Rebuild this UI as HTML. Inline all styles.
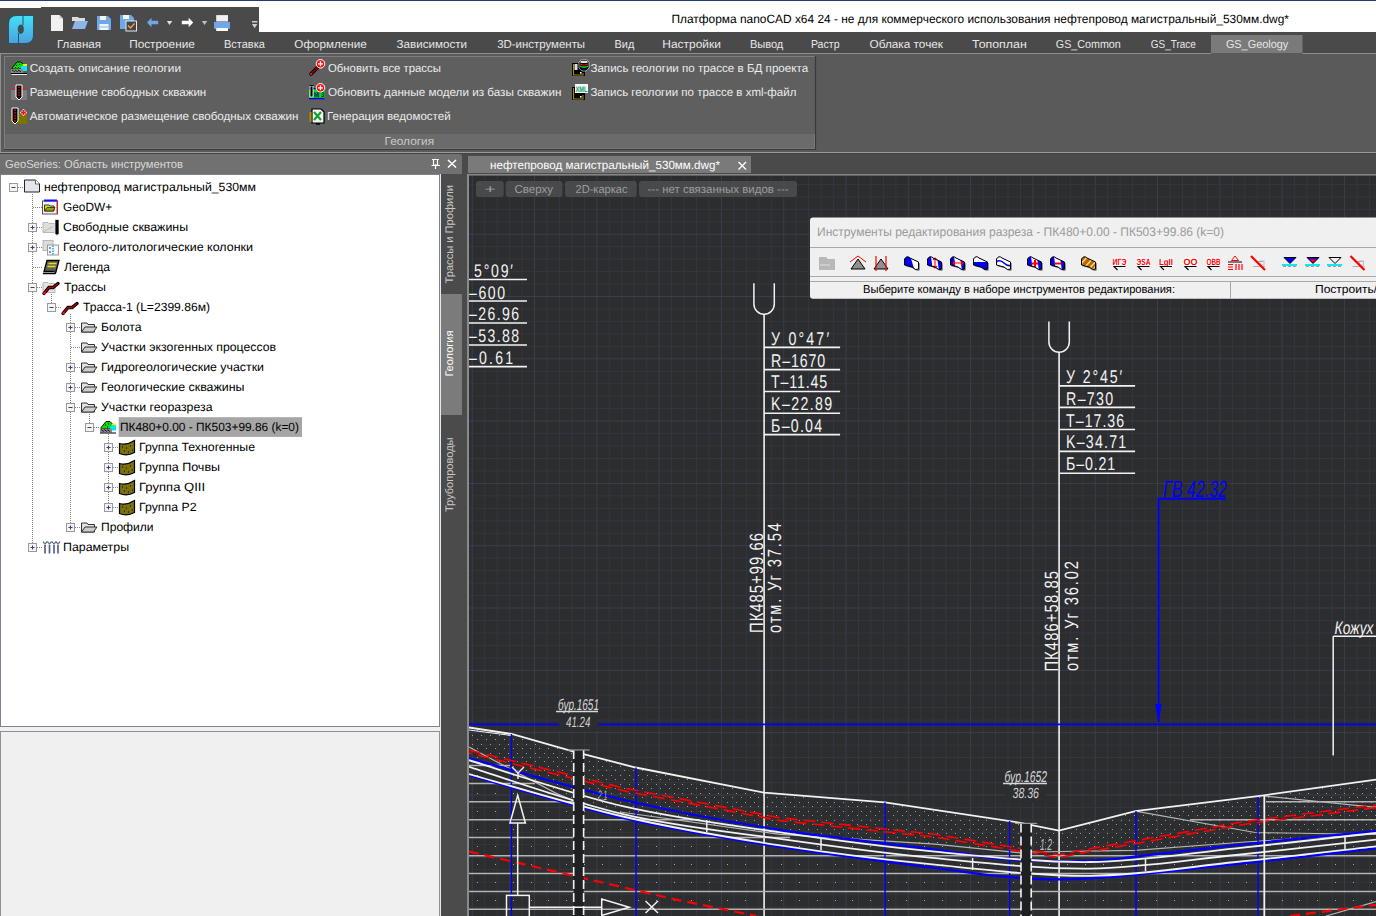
<!DOCTYPE html>
<html><head><meta charset="utf-8"><title>nanoCAD</title>
<style>html,body{margin:0;padding:0;background:#2c2d2f;overflow:hidden}svg{display:block}</style></head>
<body><svg width="1376" height="916" viewBox="0 0 1376 916" text-rendering="geometricPrecision">
<rect x="0" y="0" width="1376" height="916" fill="#2c2d2f" />
<rect x="0" y="0" width="1376" height="32" fill="#ffffff" />
<line x1="0" y1="0.5" x2="1376" y2="0.5" stroke="#1f3f70" stroke-width="1" />
<rect x="0" y="8" width="41" height="25" fill="#4a4a4a" />
<rect x="41" y="7" width="218" height="26" fill="#4a4a4a" />
<path d="M51,15 H59.5 L63,18.5 V31 H51 Z" fill="#f0f0f0"/><path d="M59.5,15 V18.5 H63" fill="#c8c8c8"/>
<path d="M72,17 H78 L79,18 H85 V21 H72 Z" fill="#dcdcdc"/><path d="M72,29 L75,21 H88 L85,29 Z" fill="#8ab6ea"/>
<path d="M97,16 H108 L111,19 V30 H97 Z" fill="#6ea8e8"/><rect x="100" y="16" width="6" height="4" fill="#f4f4f4"/><rect x="99.5" y="24" width="9" height="6" fill="#f4f4f4"/><line x1="100" y1="27" x2="108" y2="27" stroke="#6ea8e8" stroke-width="0.8"/>
<path d="M120,15 H131 L134,18 V29 H120 Z" fill="#6ea8e8"/><rect x="123" y="15" width="6" height="4" fill="#f4f4f4"/><rect x="126" y="21" width="10.5" height="10" fill="#454545" stroke="#e8e8e8" stroke-width="1"/><path d="M128,25.5 L130.5,28 L134.5,23.5" stroke="#f0a848" stroke-width="1.3" fill="none"/>
<path d="M147,22.5 L151.5,17.8 V20.8 H158.2 V24.2 H151.5 V27.2 Z" fill="#6ea8e8"/>
<path d="M166.8,21 H172.3 L169.5,25 Z" fill="#e0e0e0"/>
<path d="M193.2,22.5 L188.7,17.8 V20.8 H181.8 V24.2 H188.7 V27.2 Z" fill="#ffffff"/>
<path d="M201.8,21 H207.3 L204.5,25 Z" fill="#bdbdbd"/>
<rect x="216.2" y="15.1" width="11.8" height="6.4" fill="#f0f0f0"/><rect x="214" y="21.9" width="16" height="6.8" fill="#6ea8e8"/><rect x="216.2" y="28" width="11.8" height="3" fill="#f8f8f8"/>
<rect x="252" y="21" width="5.3" height="1.5" fill="#cfcfcf"/><path d="M252,24 H257.3 L254.6,28.3 Z" fill="#cfcfcf"/>
<text x="671.5" y="23" font-size="12" fill="#000000" font-family="Liberation Sans" textLength="617.47" lengthAdjust="spacingAndGlyphs" >Платформа nanoCAD x64 24 - не для коммерческого использования нефтепровод магистральный_530мм.dwg*</text>
<rect x="0" y="32" width="1376" height="21" fill="#4a4a4a" />
<rect x="1211" y="35" width="91.5" height="18" fill="#7a7a7a" />
<defs><linearGradient id="lg" x1="0" y1="0" x2="0" y2="1"><stop offset="0" stop-color="#44e0f6"/><stop offset="1" stop-color="#4c9fe0"/></linearGradient></defs>
<path d="M17,15.5 H33.5 V35 Q33.5,43.5 25,43.5 H8.5 V24 Q8.5,15.5 17,15.5 Z" fill="url(#lg)" stroke="#1d4a5a" stroke-width="0.8"/>
<ellipse cx="20.8" cy="29.2" rx="2.6" ry="4.2" fill="#4a4a4a" stroke="#1d4a5a" stroke-width="0.7"/>
<path d="M23,15.8 V25.5 M18.5,33 V43.2" stroke="#1d4a5a" stroke-width="0.9"/>
<text x="57.0" y="48.3" font-size="11.5" fill="#e6e6e6" font-family="Liberation Sans" textLength="44.1" lengthAdjust="spacingAndGlyphs" >Главная</text>
<text x="129.2" y="48.3" font-size="11.5" fill="#e6e6e6" font-family="Liberation Sans" textLength="65.63" lengthAdjust="spacingAndGlyphs" >Построение</text>
<text x="224.0" y="48.3" font-size="11.5" fill="#e6e6e6" font-family="Liberation Sans" textLength="40.83" lengthAdjust="spacingAndGlyphs" >Вставка</text>
<text x="294.3" y="48.3" font-size="11.5" fill="#e6e6e6" font-family="Liberation Sans" textLength="72.51" lengthAdjust="spacingAndGlyphs" >Оформление</text>
<text x="396.6" y="48.3" font-size="11.5" fill="#e6e6e6" font-family="Liberation Sans" textLength="70.44" lengthAdjust="spacingAndGlyphs" >Зависимости</text>
<text x="497.2" y="48.3" font-size="11.5" fill="#e6e6e6" font-family="Liberation Sans" textLength="87.91" lengthAdjust="spacingAndGlyphs" >3D-инструменты</text>
<text x="614.6" y="48.3" font-size="11.5" fill="#e6e6e6" font-family="Liberation Sans" textLength="19.74" lengthAdjust="spacingAndGlyphs" >Вид</text>
<text x="662.3" y="48.3" font-size="11.5" fill="#e6e6e6" font-family="Liberation Sans" textLength="58.53" lengthAdjust="spacingAndGlyphs" >Настройки</text>
<text x="749.9" y="48.3" font-size="11.5" fill="#e6e6e6" font-family="Liberation Sans" textLength="33.42" lengthAdjust="spacingAndGlyphs" >Вывод</text>
<text x="810.9" y="48.3" font-size="11.5" fill="#e6e6e6" font-family="Liberation Sans" textLength="28.64" lengthAdjust="spacingAndGlyphs" >Растр</text>
<text x="869.5" y="48.3" font-size="11.5" fill="#e6e6e6" font-family="Liberation Sans" textLength="73.5" lengthAdjust="spacingAndGlyphs" >Облака точек</text>
<text x="972.1" y="48.3" font-size="11.5" fill="#e6e6e6" font-family="Liberation Sans" textLength="54.64" lengthAdjust="spacingAndGlyphs" >Топоплан</text>
<text x="1055.8" y="48.3" font-size="11.5" fill="#e6e6e6" font-family="Liberation Sans" textLength="65.02" lengthAdjust="spacingAndGlyphs" >GS_Common</text>
<text x="1150.8" y="48.3" font-size="11.5" fill="#e6e6e6" font-family="Liberation Sans" textLength="45.03" lengthAdjust="spacingAndGlyphs" >GS_Trace</text>
<text x="1225.9" y="48.3" font-size="11.5" fill="#e6e6e6" font-family="Liberation Sans" textLength="62.32" lengthAdjust="spacingAndGlyphs" >GS_Geology</text>
<rect x="0" y="53" width="1376" height="99" fill="#5a5a5a" />
<line x1="0" y1="53.5" x2="1211" y2="53.5" stroke="#8e8e8e" stroke-width="1" />
<line x1="1302.5" y1="53.5" x2="1376" y2="53.5" stroke="#8e8e8e" stroke-width="1" />
<line x1="0.5" y1="53" x2="0.5" y2="152" stroke="#8e8e8e" stroke-width="1" />
<rect x="4" y="56" width="812" height="94" fill="#5f5f5f" />
<rect x="5" y="134" width="810" height="15" fill="#6b6b6b" />
<line x1="4" y1="56.5" x2="815" y2="56.5" stroke="#7e7e7e" stroke-width="1" />
<line x1="4.5" y1="56" x2="4.5" y2="149" stroke="#7e7e7e" stroke-width="1" />
<line x1="4" y1="149.5" x2="816" y2="149.5" stroke="#3a3a3a" stroke-width="1.2" />
<line x1="815.5" y1="56" x2="815.5" y2="150" stroke="#3a3a3a" stroke-width="1.2" />
<line x1="5" y1="148.5" x2="815" y2="148.5" stroke="#767676" stroke-width="1" />
<line x1="814.5" y1="134" x2="814.5" y2="149" stroke="#767676" stroke-width="1" />
<text x="384.5" y="145.2" font-size="11.5" fill="#c8c8c8" font-family="Liberation Sans" textLength="49.64" lengthAdjust="spacingAndGlyphs" >Геология</text>
<text x="29.8" y="71.8" font-size="11.6" fill="#ececec" font-family="Liberation Sans" textLength="151.25" lengthAdjust="spacingAndGlyphs" >Создать описание геологии</text>
<text x="29.8" y="96.4" font-size="11.6" fill="#ececec" font-family="Liberation Sans" textLength="176.43" lengthAdjust="spacingAndGlyphs" >Размещение свободных скважин</text>
<text x="29.8" y="120.3" font-size="11.6" fill="#ececec" font-family="Liberation Sans" textLength="268.64" lengthAdjust="spacingAndGlyphs" >Автоматическое размещение свободных скважин</text>
<text x="328.0" y="71.8" font-size="11.6" fill="#ececec" font-family="Liberation Sans" textLength="112.8" lengthAdjust="spacingAndGlyphs" >Обновить все трассы</text>
<text x="328.0" y="96.4" font-size="11.6" fill="#ececec" font-family="Liberation Sans" textLength="233.38" lengthAdjust="spacingAndGlyphs" >Обновить данные модели из базы скважин</text>
<text x="327.0" y="120.3" font-size="11.6" fill="#ececec" font-family="Liberation Sans" textLength="123.63" lengthAdjust="spacingAndGlyphs" >Генерация ведомостей</text>
<text x="590.4" y="71.8" font-size="11.6" fill="#ececec" font-family="Liberation Sans" textLength="217.7" lengthAdjust="spacingAndGlyphs" >Запись геологии по трассе в БД проекта</text>
<text x="590.4" y="96.4" font-size="11.6" fill="#ececec" font-family="Liberation Sans" textLength="206.0" lengthAdjust="spacingAndGlyphs" >Запись геологии по трассе в xml-файл</text>
<path d="M12,68 L17,62 H21 L26,67 L24,69 H12 Z" fill="#00e000" stroke="#000" stroke-width="0.9"/><path d="M16,65h1v1h-1z M19,64h1v1h-1z M21,66h1v1h-1z M18,67h1v1h-1z M15,67h1v1h-1z" fill="#000"/><rect x="23" y="64" width="4" height="2" fill="#f0f000"/><rect x="21" y="66" width="6" height="5" fill="#00e8f8"/><rect x="11" y="69" width="12" height="4" fill="#8a8a8a"/><path d="M12,70 l3,2 M15,70 l3,2 M18,70 l3,2" stroke="#000" stroke-width="0.8"/><path d="M11,73.5 H27" stroke="#000" stroke-width="1"/><path d="M11.5,74.5 H27" stroke="#f0f0f0" stroke-width="1"/>
<rect x="11" y="89" width="16" height="11" fill="#7c7c7c"/><line x1="11" y1="89.5" x2="27" y2="89.5" stroke="#ff1010" stroke-width="1"/>
<path d="M16,85 H22 V97 L19,100 L16,97 Z" fill="#000" stroke="#fff" stroke-width="1"/><path d="M19,86.5 V98" stroke="#ff1010" stroke-width="1.4" stroke-dasharray="1.5 1.2"/>
<rect x="11" y="114" width="16" height="10" fill="#7a7400"/>
<path d="M12,108 H18 V121 L15,124 L12,121 Z" fill="#000" stroke="#fff" stroke-width="1"/><path d="M15,109.5 V122" stroke="#ff1010" stroke-width="1.4" stroke-dasharray="1.5 1.2"/>
<path d="M23.5,109 L27,112.5 L23.5,116 L20,112.5 Z" fill="#fff"/><path d="M23.5,110 v5 M21,112.5 h5" stroke="#ff1010" stroke-width="1.8"/>
<path d="M311,74 L318,67" stroke="#000" stroke-width="3.6" stroke-linecap="round"/><path d="M311,74 L318,67" stroke="#8a0000" stroke-width="1.8"/><circle cx="311" cy="74" r="1" fill="#ff2020"/>
<circle cx="320.5" cy="63.8" r="4.3" fill="#ff1010" stroke="#fff" stroke-width="1"/><path d="M318.0,63.8 h5 M320.5,61.3 v5" stroke="#fff" stroke-width="1.3"/>
<rect x="309" y="88" width="15.5" height="11" fill="#00e000"/><rect x="309" y="88" width="15.5" height="1.2" fill="#0000e0"/><rect x="309" y="97.8" width="15.5" height="1.5" fill="#0000e0"/><text x="314" y="96.5" font-size="7" font-weight="bold" fill="#0000a0" font-family="Liberation Sans" textLength="10" lengthAdjust="spacingAndGlyphs">МГЗ</text><rect x="310" y="86" width="3" height="11" fill="#000" stroke="#fff" stroke-width="0.8"/><path d="M309.5,85.5 h4" stroke="#000" stroke-width="1"/>
<circle cx="320.5" cy="87.8" r="4.3" fill="#ff1010" stroke="#fff" stroke-width="1"/><path d="M318.0,87.8 h5 M320.5,85.3 v5" stroke="#fff" stroke-width="1.3"/>
<path d="M312,109 H321 L324,112 V123 H312 Z" fill="#f4f4f4" stroke="#000" stroke-width="1.2"/><rect x="309.5" y="112" width="2" height="10" fill="#a89000"/><path d="M314,112 L321,120 M321,112 L314,120" stroke="#10a030" stroke-width="2.2"/><path d="M316,124 h4" stroke="#000" stroke-width="1.5"/>
<rect x="572" y="63" width="13" height="13" fill="#000"/><path d="M573.5,64 V75 H583 V73" stroke="#a09000" stroke-width="1.1" fill="none"/><rect x="574.5" y="64" width="3" height="6" fill="#e0e0e0"/><rect x="580" y="72" width="1.6" height="1.6" fill="#fff"/><path d="M579,62 L581,60 H587 L589,62 V68 L586,71 H582 L579,68 Z" fill="#000" stroke="#fff" stroke-width="0.6"/><rect x="580.5" y="61" width="7" height="2" fill="#e0e0e0"/><path d="M580,64 Q584,66.5 588,64" stroke="#ff1010" stroke-width="1" fill="none"/><path d="M580,66 Q584,68.5 588,66" stroke="#00e000" stroke-width="1.3" fill="none"/><path d="M580.5,69 H587.5" stroke="#2020ff" stroke-width="1" stroke-dasharray="1 1"/>
<rect x="572" y="87" width="13" height="13" fill="#000"/><path d="M573.5,88 V99 H583 V95" stroke="#a09000" stroke-width="1.1" fill="none"/><rect x="580" y="96" width="1.6" height="1.6" fill="#fff"/><rect x="575" y="84" width="13" height="9" fill="#f8f8f8"/><text x="575.5" y="91.8" font-size="8" font-weight="bold" fill="#10a060" font-family="Liberation Sans" textLength="12" lengthAdjust="spacingAndGlyphs">XML</text>
<rect x="0" y="152" width="1376" height="3" fill="#4a4a4a" />
<line x1="0" y1="152.5" x2="1376" y2="152.5" stroke="#9a9a9a" stroke-width="1" />
<line x1="0" y1="153.5" x2="1376" y2="153.5" stroke="#444444" stroke-width="1" />
<rect x="0" y="154" width="467" height="762" fill="#4a4a4a" />
<path d="M0,154 H459 Q462,154 462,157 V174 H0 Z" fill="#717171"/>
<text x="5.0" y="168" font-size="11.5" fill="#d8d8d8" font-family="Liberation Sans" textLength="178.0" lengthAdjust="spacingAndGlyphs" >GeoSeries: Область инструментов</text>
<path d="M432,159.5 H439 M433.5,160 V165 H437.5 V160 M431.5,165.5 H440 M435.5,166 V169" stroke="#fff" stroke-width="1.2" fill="none"/>
<path d="M448,160 L456,167.5 M456,160 L448,167.5" stroke="#fff" stroke-width="1.6"/>
<rect x="0" y="726" width="440" height="190" fill="#f0f0f0" />
<rect x="0.5" y="174.5" width="439" height="552" fill="#ffffff" stroke="#7d8290" stroke-width="1"/>
<rect x="0.5" y="731.5" width="439" height="190" fill="#f0f0f0" stroke="#8d9098" stroke-width="1"/>
<rect x="440" y="174" width="1" height="742" fill="#e8e8e8" />
<rect x="441" y="174" width="26" height="742" fill="#4b4b4b" />
<rect x="441" y="294" width="21" height="121" fill="#7b7b7b" />
<text x="0" y="0" font-size="11" fill="#c8c8c8" font-family="Liberation Sans" textLength="98.4" lengthAdjust="spacingAndGlyphs" transform="translate(453.4,283.4) rotate(-90)">Трассы и Профили</text>
<text x="0" y="0" font-size="11" fill="#ffffff" font-family="Liberation Sans" textLength="46" lengthAdjust="spacingAndGlyphs" transform="translate(453.4,376.6) rotate(-90)">Геология</text>
<text x="0" y="0" font-size="11" fill="#c8c8c8" font-family="Liberation Sans" textLength="74.5" lengthAdjust="spacingAndGlyphs" transform="translate(453.4,512) rotate(-90)">Трубопроводы</text>
<rect x="467" y="154" width="909" height="21" fill="#4a4a4a" />
<rect x="468" y="156" width="283" height="17" fill="#7a7a7a" />
<text x="490.0" y="169.3" font-size="11.8" fill="#ffffff" font-family="Liberation Sans" textLength="230.01" lengthAdjust="spacingAndGlyphs" >нефтепровод магистральный_530мм.dwg*</text>
<path d="M738.5,162 L746,169.5 M746,162 L738.5,169.5" stroke="#fff" stroke-width="1.4"/>
<rect x="467" y="174" width="909" height="1.6" fill="#858585" />
<rect x="467" y="174" width="2" height="742" fill="#8a8a8a" />
<g id="drawing">
<defs><clipPath id="dc"><rect x="469" y="176" width="907" height="740"/></clipPath></defs>
<g clip-path="url(#dc)">
<rect x="469" y="176" width="907" height="740" fill="#2c2d2f" />
<line x1="472.24" y1="176" x2="472.24" y2="916" stroke="#3c3d4e" stroke-width="1"/>
<line x1="484.70" y1="176" x2="484.70" y2="916" stroke="#35363f" stroke-width="1"/>
<line x1="497.16" y1="176" x2="497.16" y2="916" stroke="#35363f" stroke-width="1"/>
<line x1="509.62" y1="176" x2="509.62" y2="916" stroke="#35363f" stroke-width="1"/>
<line x1="522.08" y1="176" x2="522.08" y2="916" stroke="#35363f" stroke-width="1"/>
<line x1="534.54" y1="176" x2="534.54" y2="916" stroke="#3c3d4e" stroke-width="1"/>
<line x1="547.00" y1="176" x2="547.00" y2="916" stroke="#35363f" stroke-width="1"/>
<line x1="559.46" y1="176" x2="559.46" y2="916" stroke="#35363f" stroke-width="1"/>
<line x1="571.92" y1="176" x2="571.92" y2="916" stroke="#35363f" stroke-width="1"/>
<line x1="584.38" y1="176" x2="584.38" y2="916" stroke="#35363f" stroke-width="1"/>
<line x1="596.84" y1="176" x2="596.84" y2="916" stroke="#3c3d4e" stroke-width="1"/>
<line x1="609.30" y1="176" x2="609.30" y2="916" stroke="#35363f" stroke-width="1"/>
<line x1="621.76" y1="176" x2="621.76" y2="916" stroke="#35363f" stroke-width="1"/>
<line x1="634.22" y1="176" x2="634.22" y2="916" stroke="#35363f" stroke-width="1"/>
<line x1="646.68" y1="176" x2="646.68" y2="916" stroke="#35363f" stroke-width="1"/>
<line x1="659.14" y1="176" x2="659.14" y2="916" stroke="#3c3d4e" stroke-width="1"/>
<line x1="671.60" y1="176" x2="671.60" y2="916" stroke="#35363f" stroke-width="1"/>
<line x1="684.06" y1="176" x2="684.06" y2="916" stroke="#35363f" stroke-width="1"/>
<line x1="696.52" y1="176" x2="696.52" y2="916" stroke="#35363f" stroke-width="1"/>
<line x1="708.98" y1="176" x2="708.98" y2="916" stroke="#35363f" stroke-width="1"/>
<line x1="721.44" y1="176" x2="721.44" y2="916" stroke="#3c3d4e" stroke-width="1"/>
<line x1="733.90" y1="176" x2="733.90" y2="916" stroke="#35363f" stroke-width="1"/>
<line x1="746.36" y1="176" x2="746.36" y2="916" stroke="#35363f" stroke-width="1"/>
<line x1="758.82" y1="176" x2="758.82" y2="916" stroke="#35363f" stroke-width="1"/>
<line x1="771.28" y1="176" x2="771.28" y2="916" stroke="#35363f" stroke-width="1"/>
<line x1="783.74" y1="176" x2="783.74" y2="916" stroke="#3c3d4e" stroke-width="1"/>
<line x1="796.20" y1="176" x2="796.20" y2="916" stroke="#35363f" stroke-width="1"/>
<line x1="808.66" y1="176" x2="808.66" y2="916" stroke="#35363f" stroke-width="1"/>
<line x1="821.12" y1="176" x2="821.12" y2="916" stroke="#35363f" stroke-width="1"/>
<line x1="833.58" y1="176" x2="833.58" y2="916" stroke="#35363f" stroke-width="1"/>
<line x1="846.04" y1="176" x2="846.04" y2="916" stroke="#3c3d4e" stroke-width="1"/>
<line x1="858.50" y1="176" x2="858.50" y2="916" stroke="#35363f" stroke-width="1"/>
<line x1="870.96" y1="176" x2="870.96" y2="916" stroke="#35363f" stroke-width="1"/>
<line x1="883.42" y1="176" x2="883.42" y2="916" stroke="#35363f" stroke-width="1"/>
<line x1="895.88" y1="176" x2="895.88" y2="916" stroke="#35363f" stroke-width="1"/>
<line x1="908.34" y1="176" x2="908.34" y2="916" stroke="#3c3d4e" stroke-width="1"/>
<line x1="920.80" y1="176" x2="920.80" y2="916" stroke="#35363f" stroke-width="1"/>
<line x1="933.26" y1="176" x2="933.26" y2="916" stroke="#35363f" stroke-width="1"/>
<line x1="945.72" y1="176" x2="945.72" y2="916" stroke="#35363f" stroke-width="1"/>
<line x1="958.18" y1="176" x2="958.18" y2="916" stroke="#35363f" stroke-width="1"/>
<line x1="970.64" y1="176" x2="970.64" y2="916" stroke="#3c3d4e" stroke-width="1"/>
<line x1="983.10" y1="176" x2="983.10" y2="916" stroke="#35363f" stroke-width="1"/>
<line x1="995.56" y1="176" x2="995.56" y2="916" stroke="#35363f" stroke-width="1"/>
<line x1="1008.02" y1="176" x2="1008.02" y2="916" stroke="#35363f" stroke-width="1"/>
<line x1="1020.48" y1="176" x2="1020.48" y2="916" stroke="#35363f" stroke-width="1"/>
<line x1="1032.94" y1="176" x2="1032.94" y2="916" stroke="#3c3d4e" stroke-width="1"/>
<line x1="1045.40" y1="176" x2="1045.40" y2="916" stroke="#35363f" stroke-width="1"/>
<line x1="1057.86" y1="176" x2="1057.86" y2="916" stroke="#35363f" stroke-width="1"/>
<line x1="1070.32" y1="176" x2="1070.32" y2="916" stroke="#35363f" stroke-width="1"/>
<line x1="1082.78" y1="176" x2="1082.78" y2="916" stroke="#35363f" stroke-width="1"/>
<line x1="1095.24" y1="176" x2="1095.24" y2="916" stroke="#3c3d4e" stroke-width="1"/>
<line x1="1107.70" y1="176" x2="1107.70" y2="916" stroke="#35363f" stroke-width="1"/>
<line x1="1120.16" y1="176" x2="1120.16" y2="916" stroke="#35363f" stroke-width="1"/>
<line x1="1132.62" y1="176" x2="1132.62" y2="916" stroke="#35363f" stroke-width="1"/>
<line x1="1145.08" y1="176" x2="1145.08" y2="916" stroke="#35363f" stroke-width="1"/>
<line x1="1157.54" y1="176" x2="1157.54" y2="916" stroke="#3c3d4e" stroke-width="1"/>
<line x1="1170.00" y1="176" x2="1170.00" y2="916" stroke="#35363f" stroke-width="1"/>
<line x1="1182.46" y1="176" x2="1182.46" y2="916" stroke="#35363f" stroke-width="1"/>
<line x1="1194.92" y1="176" x2="1194.92" y2="916" stroke="#35363f" stroke-width="1"/>
<line x1="1207.38" y1="176" x2="1207.38" y2="916" stroke="#35363f" stroke-width="1"/>
<line x1="1219.84" y1="176" x2="1219.84" y2="916" stroke="#3c3d4e" stroke-width="1"/>
<line x1="1232.30" y1="176" x2="1232.30" y2="916" stroke="#35363f" stroke-width="1"/>
<line x1="1244.76" y1="176" x2="1244.76" y2="916" stroke="#35363f" stroke-width="1"/>
<line x1="1257.22" y1="176" x2="1257.22" y2="916" stroke="#35363f" stroke-width="1"/>
<line x1="1269.68" y1="176" x2="1269.68" y2="916" stroke="#35363f" stroke-width="1"/>
<line x1="1282.14" y1="176" x2="1282.14" y2="916" stroke="#3c3d4e" stroke-width="1"/>
<line x1="1294.60" y1="176" x2="1294.60" y2="916" stroke="#35363f" stroke-width="1"/>
<line x1="1307.06" y1="176" x2="1307.06" y2="916" stroke="#35363f" stroke-width="1"/>
<line x1="1319.52" y1="176" x2="1319.52" y2="916" stroke="#35363f" stroke-width="1"/>
<line x1="1331.98" y1="176" x2="1331.98" y2="916" stroke="#35363f" stroke-width="1"/>
<line x1="1344.44" y1="176" x2="1344.44" y2="916" stroke="#3c3d4e" stroke-width="1"/>
<line x1="1356.90" y1="176" x2="1356.90" y2="916" stroke="#35363f" stroke-width="1"/>
<line x1="1369.36" y1="176" x2="1369.36" y2="916" stroke="#35363f" stroke-width="1"/>
<line x1="469" y1="184.38" x2="1376" y2="184.38" stroke="#35363f" stroke-width="1"/>
<line x1="469" y1="196.84" x2="1376" y2="196.84" stroke="#35363f" stroke-width="1"/>
<line x1="469" y1="209.30" x2="1376" y2="209.30" stroke="#35363f" stroke-width="1"/>
<line x1="469" y1="221.76" x2="1376" y2="221.76" stroke="#35363f" stroke-width="1"/>
<line x1="469" y1="234.22" x2="1376" y2="234.22" stroke="#3c3d4e" stroke-width="1"/>
<line x1="469" y1="246.68" x2="1376" y2="246.68" stroke="#35363f" stroke-width="1"/>
<line x1="469" y1="259.14" x2="1376" y2="259.14" stroke="#35363f" stroke-width="1"/>
<line x1="469" y1="271.60" x2="1376" y2="271.60" stroke="#35363f" stroke-width="1"/>
<line x1="469" y1="284.06" x2="1376" y2="284.06" stroke="#35363f" stroke-width="1"/>
<line x1="469" y1="296.52" x2="1376" y2="296.52" stroke="#3c3d4e" stroke-width="1"/>
<line x1="469" y1="308.98" x2="1376" y2="308.98" stroke="#35363f" stroke-width="1"/>
<line x1="469" y1="321.44" x2="1376" y2="321.44" stroke="#35363f" stroke-width="1"/>
<line x1="469" y1="333.90" x2="1376" y2="333.90" stroke="#35363f" stroke-width="1"/>
<line x1="469" y1="346.36" x2="1376" y2="346.36" stroke="#35363f" stroke-width="1"/>
<line x1="469" y1="358.82" x2="1376" y2="358.82" stroke="#3c3d4e" stroke-width="1"/>
<line x1="469" y1="371.28" x2="1376" y2="371.28" stroke="#35363f" stroke-width="1"/>
<line x1="469" y1="383.74" x2="1376" y2="383.74" stroke="#35363f" stroke-width="1"/>
<line x1="469" y1="396.20" x2="1376" y2="396.20" stroke="#35363f" stroke-width="1"/>
<line x1="469" y1="408.66" x2="1376" y2="408.66" stroke="#35363f" stroke-width="1"/>
<line x1="469" y1="421.12" x2="1376" y2="421.12" stroke="#3c3d4e" stroke-width="1"/>
<line x1="469" y1="433.58" x2="1376" y2="433.58" stroke="#35363f" stroke-width="1"/>
<line x1="469" y1="446.04" x2="1376" y2="446.04" stroke="#35363f" stroke-width="1"/>
<line x1="469" y1="458.50" x2="1376" y2="458.50" stroke="#35363f" stroke-width="1"/>
<line x1="469" y1="470.96" x2="1376" y2="470.96" stroke="#35363f" stroke-width="1"/>
<line x1="469" y1="483.42" x2="1376" y2="483.42" stroke="#3c3d4e" stroke-width="1"/>
<line x1="469" y1="495.88" x2="1376" y2="495.88" stroke="#35363f" stroke-width="1"/>
<line x1="469" y1="508.34" x2="1376" y2="508.34" stroke="#35363f" stroke-width="1"/>
<line x1="469" y1="520.80" x2="1376" y2="520.80" stroke="#35363f" stroke-width="1"/>
<line x1="469" y1="533.26" x2="1376" y2="533.26" stroke="#35363f" stroke-width="1"/>
<line x1="469" y1="545.72" x2="1376" y2="545.72" stroke="#3c3d4e" stroke-width="1"/>
<line x1="469" y1="558.18" x2="1376" y2="558.18" stroke="#35363f" stroke-width="1"/>
<line x1="469" y1="570.64" x2="1376" y2="570.64" stroke="#35363f" stroke-width="1"/>
<line x1="469" y1="583.10" x2="1376" y2="583.10" stroke="#35363f" stroke-width="1"/>
<line x1="469" y1="595.56" x2="1376" y2="595.56" stroke="#35363f" stroke-width="1"/>
<line x1="469" y1="608.02" x2="1376" y2="608.02" stroke="#3c3d4e" stroke-width="1"/>
<line x1="469" y1="620.48" x2="1376" y2="620.48" stroke="#35363f" stroke-width="1"/>
<line x1="469" y1="632.94" x2="1376" y2="632.94" stroke="#35363f" stroke-width="1"/>
<line x1="469" y1="645.40" x2="1376" y2="645.40" stroke="#35363f" stroke-width="1"/>
<line x1="469" y1="657.86" x2="1376" y2="657.86" stroke="#35363f" stroke-width="1"/>
<line x1="469" y1="670.32" x2="1376" y2="670.32" stroke="#3c3d4e" stroke-width="1"/>
<line x1="469" y1="682.78" x2="1376" y2="682.78" stroke="#35363f" stroke-width="1"/>
<line x1="469" y1="695.24" x2="1376" y2="695.24" stroke="#35363f" stroke-width="1"/>
<line x1="469" y1="707.70" x2="1376" y2="707.70" stroke="#35363f" stroke-width="1"/>
<line x1="469" y1="720.16" x2="1376" y2="720.16" stroke="#35363f" stroke-width="1"/>
<line x1="469" y1="732.62" x2="1376" y2="732.62" stroke="#3c3d4e" stroke-width="1"/>
<line x1="469" y1="745.08" x2="1376" y2="745.08" stroke="#35363f" stroke-width="1"/>
<line x1="469" y1="757.54" x2="1376" y2="757.54" stroke="#35363f" stroke-width="1"/>
<line x1="469" y1="770.00" x2="1376" y2="770.00" stroke="#35363f" stroke-width="1"/>
<line x1="469" y1="782.46" x2="1376" y2="782.46" stroke="#35363f" stroke-width="1"/>
<line x1="469" y1="794.92" x2="1376" y2="794.92" stroke="#3c3d4e" stroke-width="1"/>
<line x1="469" y1="807.38" x2="1376" y2="807.38" stroke="#35363f" stroke-width="1"/>
<line x1="469" y1="819.84" x2="1376" y2="819.84" stroke="#35363f" stroke-width="1"/>
<line x1="469" y1="832.30" x2="1376" y2="832.30" stroke="#35363f" stroke-width="1"/>
<line x1="469" y1="844.76" x2="1376" y2="844.76" stroke="#35363f" stroke-width="1"/>
<line x1="469" y1="857.22" x2="1376" y2="857.22" stroke="#3c3d4e" stroke-width="1"/>
<line x1="469" y1="869.68" x2="1376" y2="869.68" stroke="#35363f" stroke-width="1"/>
<line x1="469" y1="882.14" x2="1376" y2="882.14" stroke="#35363f" stroke-width="1"/>
<line x1="469" y1="894.60" x2="1376" y2="894.60" stroke="#35363f" stroke-width="1"/>
<line x1="469" y1="907.06" x2="1376" y2="907.06" stroke="#35363f" stroke-width="1"/>
<line x1="469" y1="919.52" x2="1376" y2="919.52" stroke="#3c3d4e" stroke-width="1"/>
<line x1="469" y1="279.5" x2="527" y2="279.5" stroke="#f2f2f2" stroke-width="1.6" />
<line x1="469" y1="301" x2="527" y2="301" stroke="#f2f2f2" stroke-width="1.6" />
<line x1="469" y1="323" x2="527" y2="323" stroke="#f2f2f2" stroke-width="1.6" />
<line x1="469" y1="345" x2="527" y2="345" stroke="#f2f2f2" stroke-width="1.6" />
<line x1="469" y1="366.6" x2="527" y2="366.6" stroke="#f2f2f2" stroke-width="1.6" />
<text x="0" y="0" font-size="14.09" fill="#f2f2f2" font-family="Liberation Sans" textLength="39" lengthAdjust="spacing" transform="translate(474,276.6) scale(1,1.3)">5°09′</text>
<text x="0" y="0" font-size="14.09" fill="#f2f2f2" font-family="Liberation Sans" textLength="36" lengthAdjust="spacing" transform="translate(469,298.8) scale(1,1.3)">–600</text>
<text x="0" y="0" font-size="14.09" fill="#f2f2f2" font-family="Liberation Sans" textLength="50" lengthAdjust="spacing" transform="translate(469,320.4) scale(1,1.3)">–26.96</text>
<text x="0" y="0" font-size="14.09" fill="#f2f2f2" font-family="Liberation Sans" textLength="50" lengthAdjust="spacing" transform="translate(469,342.4) scale(1,1.3)">–53.88</text>
<text x="0" y="0" font-size="14.09" fill="#f2f2f2" font-family="Liberation Sans" textLength="44" lengthAdjust="spacing" transform="translate(469,364) scale(1,1.3)">–0.61</text>
<path d="M753.9,283.3 V304 A10.2,10.2 0 0 0 774.3000000000001,304 V283.3" stroke="#f2f2f2" stroke-width="1.5" fill="none"/>
<line x1="764.1" y1="314" x2="764.1" y2="916" stroke="#f2f2f2" stroke-width="1.6" />
<line x1="764.1" y1="347.4" x2="840.1" y2="347.4" stroke="#f2f2f2" stroke-width="1.6" />
<line x1="764.1" y1="369.6" x2="840.1" y2="369.6" stroke="#f2f2f2" stroke-width="1.6" />
<line x1="764.1" y1="391.5" x2="840.1" y2="391.5" stroke="#f2f2f2" stroke-width="1.6" />
<line x1="764.1" y1="413.2" x2="840.1" y2="413.2" stroke="#f2f2f2" stroke-width="1.6" />
<line x1="764.1" y1="434.6" x2="840.1" y2="434.6" stroke="#f2f2f2" stroke-width="1.6" />
<text x="0" y="0" font-size="14.20" fill="#f2f2f2" font-family="Liberation Sans" textLength="58" lengthAdjust="spacing" transform="translate(771.1,344.6) scale(1,1.3)">У 0°47′</text>
<text x="0" y="0" font-size="14.20" fill="#f2f2f2" font-family="Liberation Sans" textLength="54" lengthAdjust="spacing" transform="translate(771.1,366.5) scale(1,1.3)">R–1670</text>
<text x="0" y="0" font-size="14.20" fill="#f2f2f2" font-family="Liberation Sans" textLength="56" lengthAdjust="spacing" transform="translate(771.1,388.4) scale(1,1.3)">T–11.45</text>
<text x="0" y="0" font-size="14.20" fill="#f2f2f2" font-family="Liberation Sans" textLength="61" lengthAdjust="spacing" transform="translate(771.1,410) scale(1,1.3)">K–22.89</text>
<text x="0" y="0" font-size="14.20" fill="#f2f2f2" font-family="Liberation Sans" textLength="51" lengthAdjust="spacing" transform="translate(771.1,432) scale(1,1.3)">Б–0.04</text>
<path d="M1048.8999999999999,321.5 V342.1 A10.2,10.2 0 0 0 1069.3,342.1 V321.5" stroke="#f2f2f2" stroke-width="1.5" fill="none"/>
<line x1="1059.1" y1="352.1" x2="1059.1" y2="916" stroke="#f2f2f2" stroke-width="1.6" />
<line x1="1059.1" y1="385.9" x2="1135.1" y2="385.9" stroke="#f2f2f2" stroke-width="1.6" />
<line x1="1059.1" y1="407.4" x2="1135.1" y2="407.4" stroke="#f2f2f2" stroke-width="1.6" />
<line x1="1059.1" y1="429.5" x2="1135.1" y2="429.5" stroke="#f2f2f2" stroke-width="1.6" />
<line x1="1059.1" y1="451.4" x2="1135.1" y2="451.4" stroke="#f2f2f2" stroke-width="1.6" />
<line x1="1059.1" y1="473.3" x2="1135.1" y2="473.3" stroke="#f2f2f2" stroke-width="1.6" />
<text x="0" y="0" font-size="14.20" fill="#f2f2f2" font-family="Liberation Sans" textLength="56" lengthAdjust="spacing" transform="translate(1066.1,382.7) scale(1,1.3)">У 2°45′</text>
<text x="0" y="0" font-size="14.20" fill="#f2f2f2" font-family="Liberation Sans" textLength="47" lengthAdjust="spacing" transform="translate(1066.1,404.6) scale(1,1.3)">R–730</text>
<text x="0" y="0" font-size="14.20" fill="#f2f2f2" font-family="Liberation Sans" textLength="58" lengthAdjust="spacing" transform="translate(1066.1,426.5) scale(1,1.3)">T–17.36</text>
<text x="0" y="0" font-size="14.20" fill="#f2f2f2" font-family="Liberation Sans" textLength="60" lengthAdjust="spacing" transform="translate(1066.1,448.3) scale(1,1.3)">K–34.71</text>
<text x="0" y="0" font-size="14.20" fill="#f2f2f2" font-family="Liberation Sans" textLength="49" lengthAdjust="spacing" transform="translate(1066.1,470) scale(1,1.3)">Б–0.21</text>
<text x="0" y="0" font-size="14.76" fill="#f2f2f2" font-family="Liberation Sans" textLength="100" lengthAdjust="spacing" transform="translate(762.6,633) rotate(-90) scale(1,1.3)">ПК485+99.66</text>
<text x="0" y="0" font-size="14.76" fill="#f2f2f2" font-family="Liberation Sans" textLength="110" lengthAdjust="spacing" transform="translate(781,633) rotate(-90) scale(1,1.3)">отм. Уг  37.54</text>
<text x="0" y="0" font-size="14.76" fill="#f2f2f2" font-family="Liberation Sans" textLength="100.6" lengthAdjust="spacing" transform="translate(1058,671.6) rotate(-90) scale(1,1.3)">ПК486+58.85</text>
<text x="0" y="0" font-size="14.76" fill="#f2f2f2" font-family="Liberation Sans" textLength="110" lengthAdjust="spacing" transform="translate(1077.5,671) rotate(-90) scale(1,1.3)">отм. Уг  36.02</text>
<defs><clipPath id="dense"><polygon points="469,727.5 511.5,734 573.8,751.7 635.7,767.5 764.2,792.7 885,802.3 1020.4,822.8 1059,830.6 1135.5,811.1 1264,795.3 1376,779.6 1376,834 1245,842 1135,850.4 1059,853.5 1020,852.9 935,844.2 780,834.3 620,812 556.7,793.6 469,747"/></clipPath><clipPath id="sparse"><polygon points="469,747 556.7,793.6 620,812 780,834.3 935,844.2 1020,852.9 1059,853.5 1135,850.4 1245,842 1376,834 1376,920 469,920"/></clipPath></defs>
<path clip-path="url(#dense)" fill="#9a9a9a" d="M477,730h1v1h-1zM472,735h1v1h-1zM481,735h1v1h-1zM490,735h1v1h-1zM499,735h1v1h-1zM508,735h1v1h-1zM477,739h1v1h-1zM486,739h1v1h-1zM495,739h1v1h-1zM504,739h1v1h-1zM513,739h1v1h-1zM522,739h1v1h-1zM472,744h1v1h-1zM481,744h1v1h-1zM490,744h1v1h-1zM499,744h1v1h-1zM508,744h1v1h-1zM517,744h1v1h-1zM526,744h1v1h-1zM535,744h1v1h-1zM477,748h1v1h-1zM486,748h1v1h-1zM495,748h1v1h-1zM504,748h1v1h-1zM513,748h1v1h-1zM522,748h1v1h-1zM530,748h1v1h-1zM539,748h1v1h-1zM548,748h1v1h-1zM557,748h1v1h-1zM481,753h1v1h-1zM490,753h1v1h-1zM499,753h1v1h-1zM508,753h1v1h-1zM517,753h1v1h-1zM526,753h1v1h-1zM535,753h1v1h-1zM544,753h1v1h-1zM553,753h1v1h-1zM562,753h1v1h-1zM571,753h1v1h-1zM495,757h1v1h-1zM504,757h1v1h-1zM513,757h1v1h-1zM522,757h1v1h-1zM530,757h1v1h-1zM539,757h1v1h-1zM548,757h1v1h-1zM557,757h1v1h-1zM566,757h1v1h-1zM575,757h1v1h-1zM584,757h1v1h-1zM499,761h1v1h-1zM508,761h1v1h-1zM517,761h1v1h-1zM526,761h1v1h-1zM535,761h1v1h-1zM544,761h1v1h-1zM553,761h1v1h-1zM562,761h1v1h-1zM571,761h1v1h-1zM580,761h1v1h-1zM589,761h1v1h-1zM598,761h1v1h-1zM606,761h1v1h-1zM504,766h1v1h-1zM513,766h1v1h-1zM522,766h1v1h-1zM530,766h1v1h-1zM539,766h1v1h-1zM548,766h1v1h-1zM557,766h1v1h-1zM566,766h1v1h-1zM575,766h1v1h-1zM584,766h1v1h-1zM593,766h1v1h-1zM602,766h1v1h-1zM611,766h1v1h-1zM620,766h1v1h-1zM517,770h1v1h-1zM526,770h1v1h-1zM535,770h1v1h-1zM544,770h1v1h-1zM553,770h1v1h-1zM562,770h1v1h-1zM571,770h1v1h-1zM580,770h1v1h-1zM589,770h1v1h-1zM598,770h1v1h-1zM606,770h1v1h-1zM615,770h1v1h-1zM624,770h1v1h-1zM633,770h1v1h-1zM642,770h1v1h-1zM522,775h1v1h-1zM530,775h1v1h-1zM539,775h1v1h-1zM548,775h1v1h-1zM557,775h1v1h-1zM566,775h1v1h-1zM575,775h1v1h-1zM584,775h1v1h-1zM593,775h1v1h-1zM602,775h1v1h-1zM611,775h1v1h-1zM620,775h1v1h-1zM629,775h1v1h-1zM638,775h1v1h-1zM647,775h1v1h-1zM656,775h1v1h-1zM665,775h1v1h-1zM535,779h1v1h-1zM544,779h1v1h-1zM553,779h1v1h-1zM562,779h1v1h-1zM571,779h1v1h-1zM580,779h1v1h-1zM589,779h1v1h-1zM598,779h1v1h-1zM606,779h1v1h-1zM615,779h1v1h-1zM624,779h1v1h-1zM633,779h1v1h-1zM642,779h1v1h-1zM651,779h1v1h-1zM660,779h1v1h-1zM669,779h1v1h-1zM678,779h1v1h-1zM687,779h1v1h-1zM539,784h1v1h-1zM548,784h1v1h-1zM557,784h1v1h-1zM566,784h1v1h-1zM575,784h1v1h-1zM584,784h1v1h-1zM593,784h1v1h-1zM602,784h1v1h-1zM611,784h1v1h-1zM620,784h1v1h-1zM629,784h1v1h-1zM638,784h1v1h-1zM647,784h1v1h-1zM656,784h1v1h-1zM665,784h1v1h-1zM674,784h1v1h-1zM682,784h1v1h-1zM691,784h1v1h-1zM700,784h1v1h-1zM709,784h1v1h-1zM1362,784h1v1h-1zM1371,784h1v1h-1zM553,788h1v1h-1zM562,788h1v1h-1zM571,788h1v1h-1zM580,788h1v1h-1zM589,788h1v1h-1zM598,788h1v1h-1zM606,788h1v1h-1zM615,788h1v1h-1zM624,788h1v1h-1zM633,788h1v1h-1zM642,788h1v1h-1zM651,788h1v1h-1zM660,788h1v1h-1zM669,788h1v1h-1zM678,788h1v1h-1zM687,788h1v1h-1zM696,788h1v1h-1zM705,788h1v1h-1zM714,788h1v1h-1zM723,788h1v1h-1zM732,788h1v1h-1zM1322,788h1v1h-1zM1331,788h1v1h-1zM1340,788h1v1h-1zM1349,788h1v1h-1zM1357,788h1v1h-1zM1366,788h1v1h-1zM1375,788h1v1h-1zM557,793h1v1h-1zM566,793h1v1h-1zM575,793h1v1h-1zM584,793h1v1h-1zM593,793h1v1h-1zM602,793h1v1h-1zM611,793h1v1h-1zM620,793h1v1h-1zM629,793h1v1h-1zM638,793h1v1h-1zM647,793h1v1h-1zM656,793h1v1h-1zM665,793h1v1h-1zM674,793h1v1h-1zM682,793h1v1h-1zM691,793h1v1h-1zM700,793h1v1h-1zM709,793h1v1h-1zM718,793h1v1h-1zM727,793h1v1h-1zM736,793h1v1h-1zM745,793h1v1h-1zM754,793h1v1h-1zM1290,793h1v1h-1zM1299,793h1v1h-1zM1308,793h1v1h-1zM1317,793h1v1h-1zM1326,793h1v1h-1zM1335,793h1v1h-1zM1344,793h1v1h-1zM1353,793h1v1h-1zM1362,793h1v1h-1zM1371,793h1v1h-1zM571,797h1v1h-1zM580,797h1v1h-1zM589,797h1v1h-1zM598,797h1v1h-1zM606,797h1v1h-1zM615,797h1v1h-1zM624,797h1v1h-1zM633,797h1v1h-1zM642,797h1v1h-1zM651,797h1v1h-1zM660,797h1v1h-1zM669,797h1v1h-1zM678,797h1v1h-1zM687,797h1v1h-1zM696,797h1v1h-1zM705,797h1v1h-1zM714,797h1v1h-1zM723,797h1v1h-1zM732,797h1v1h-1zM741,797h1v1h-1zM750,797h1v1h-1zM758,797h1v1h-1zM767,797h1v1h-1zM776,797h1v1h-1zM785,797h1v1h-1zM794,797h1v1h-1zM803,797h1v1h-1zM1259,797h1v1h-1zM1268,797h1v1h-1zM1277,797h1v1h-1zM1286,797h1v1h-1zM1295,797h1v1h-1zM1304,797h1v1h-1zM1313,797h1v1h-1zM1322,797h1v1h-1zM1331,797h1v1h-1zM1340,797h1v1h-1zM1349,797h1v1h-1zM1357,797h1v1h-1zM1366,797h1v1h-1zM1375,797h1v1h-1zM584,802h1v1h-1zM593,802h1v1h-1zM602,802h1v1h-1zM611,802h1v1h-1zM620,802h1v1h-1zM629,802h1v1h-1zM638,802h1v1h-1zM647,802h1v1h-1zM656,802h1v1h-1zM665,802h1v1h-1zM674,802h1v1h-1zM682,802h1v1h-1zM691,802h1v1h-1zM700,802h1v1h-1zM709,802h1v1h-1zM718,802h1v1h-1zM727,802h1v1h-1zM736,802h1v1h-1zM745,802h1v1h-1zM754,802h1v1h-1zM763,802h1v1h-1zM772,802h1v1h-1zM781,802h1v1h-1zM790,802h1v1h-1zM799,802h1v1h-1zM808,802h1v1h-1zM817,802h1v1h-1zM826,802h1v1h-1zM834,802h1v1h-1zM843,802h1v1h-1zM852,802h1v1h-1zM861,802h1v1h-1zM1228,802h1v1h-1zM1237,802h1v1h-1zM1246,802h1v1h-1zM1255,802h1v1h-1zM1264,802h1v1h-1zM1273,802h1v1h-1zM1281,802h1v1h-1zM1290,802h1v1h-1zM1299,802h1v1h-1zM1308,802h1v1h-1zM1317,802h1v1h-1zM1326,802h1v1h-1zM1335,802h1v1h-1zM1344,802h1v1h-1zM1353,802h1v1h-1zM1362,802h1v1h-1zM1371,802h1v1h-1zM598,806h1v1h-1zM606,806h1v1h-1zM615,806h1v1h-1zM624,806h1v1h-1zM633,806h1v1h-1zM642,806h1v1h-1zM651,806h1v1h-1zM660,806h1v1h-1zM669,806h1v1h-1zM678,806h1v1h-1zM687,806h1v1h-1zM696,806h1v1h-1zM705,806h1v1h-1zM714,806h1v1h-1zM723,806h1v1h-1zM732,806h1v1h-1zM741,806h1v1h-1zM750,806h1v1h-1zM758,806h1v1h-1zM767,806h1v1h-1zM776,806h1v1h-1zM785,806h1v1h-1zM794,806h1v1h-1zM803,806h1v1h-1zM812,806h1v1h-1zM821,806h1v1h-1zM830,806h1v1h-1zM839,806h1v1h-1zM848,806h1v1h-1zM857,806h1v1h-1zM866,806h1v1h-1zM875,806h1v1h-1zM884,806h1v1h-1zM893,806h1v1h-1zM902,806h1v1h-1zM1188,806h1v1h-1zM1197,806h1v1h-1zM1205,806h1v1h-1zM1214,806h1v1h-1zM1223,806h1v1h-1zM1232,806h1v1h-1zM1241,806h1v1h-1zM1250,806h1v1h-1zM1259,806h1v1h-1zM1268,806h1v1h-1zM1277,806h1v1h-1zM1286,806h1v1h-1zM1295,806h1v1h-1zM1304,806h1v1h-1zM1313,806h1v1h-1zM1322,806h1v1h-1zM1331,806h1v1h-1zM1340,806h1v1h-1zM1349,806h1v1h-1zM1357,806h1v1h-1zM1366,806h1v1h-1zM1375,806h1v1h-1zM620,811h1v1h-1zM629,811h1v1h-1zM638,811h1v1h-1zM647,811h1v1h-1zM656,811h1v1h-1zM665,811h1v1h-1zM674,811h1v1h-1zM682,811h1v1h-1zM691,811h1v1h-1zM700,811h1v1h-1zM709,811h1v1h-1zM718,811h1v1h-1zM727,811h1v1h-1zM736,811h1v1h-1zM745,811h1v1h-1zM754,811h1v1h-1zM763,811h1v1h-1zM772,811h1v1h-1zM781,811h1v1h-1zM790,811h1v1h-1zM799,811h1v1h-1zM808,811h1v1h-1zM817,811h1v1h-1zM826,811h1v1h-1zM834,811h1v1h-1zM843,811h1v1h-1zM852,811h1v1h-1zM861,811h1v1h-1zM870,811h1v1h-1zM879,811h1v1h-1zM888,811h1v1h-1zM897,811h1v1h-1zM906,811h1v1h-1zM915,811h1v1h-1zM924,811h1v1h-1zM933,811h1v1h-1zM1156,811h1v1h-1zM1165,811h1v1h-1zM1174,811h1v1h-1zM1183,811h1v1h-1zM1192,811h1v1h-1zM1201,811h1v1h-1zM1210,811h1v1h-1zM1219,811h1v1h-1zM1228,811h1v1h-1zM1237,811h1v1h-1zM1246,811h1v1h-1zM1255,811h1v1h-1zM1264,811h1v1h-1zM1273,811h1v1h-1zM1281,811h1v1h-1zM1290,811h1v1h-1zM1299,811h1v1h-1zM1308,811h1v1h-1zM1317,811h1v1h-1zM1326,811h1v1h-1zM1335,811h1v1h-1zM1344,811h1v1h-1zM1353,811h1v1h-1zM1362,811h1v1h-1zM1371,811h1v1h-1zM642,815h1v1h-1zM651,815h1v1h-1zM660,815h1v1h-1zM669,815h1v1h-1zM678,815h1v1h-1zM687,815h1v1h-1zM696,815h1v1h-1zM705,815h1v1h-1zM714,815h1v1h-1zM723,815h1v1h-1zM732,815h1v1h-1zM741,815h1v1h-1zM750,815h1v1h-1zM758,815h1v1h-1zM767,815h1v1h-1zM776,815h1v1h-1zM785,815h1v1h-1zM794,815h1v1h-1zM803,815h1v1h-1zM812,815h1v1h-1zM821,815h1v1h-1zM830,815h1v1h-1zM839,815h1v1h-1zM848,815h1v1h-1zM857,815h1v1h-1zM866,815h1v1h-1zM875,815h1v1h-1zM884,815h1v1h-1zM893,815h1v1h-1zM902,815h1v1h-1zM910,815h1v1h-1zM919,815h1v1h-1zM928,815h1v1h-1zM937,815h1v1h-1zM946,815h1v1h-1zM955,815h1v1h-1zM1125,815h1v1h-1zM1134,815h1v1h-1zM1143,815h1v1h-1zM1152,815h1v1h-1zM1161,815h1v1h-1zM1170,815h1v1h-1zM1179,815h1v1h-1zM1188,815h1v1h-1zM1197,815h1v1h-1zM1205,815h1v1h-1zM1214,815h1v1h-1zM1223,815h1v1h-1zM1232,815h1v1h-1zM1241,815h1v1h-1zM1250,815h1v1h-1zM1259,815h1v1h-1zM1268,815h1v1h-1zM1277,815h1v1h-1zM1286,815h1v1h-1zM1295,815h1v1h-1zM1304,815h1v1h-1zM1313,815h1v1h-1zM1322,815h1v1h-1zM1331,815h1v1h-1zM1340,815h1v1h-1zM1349,815h1v1h-1zM1357,815h1v1h-1zM1366,815h1v1h-1zM1375,815h1v1h-1zM674,820h1v1h-1zM682,820h1v1h-1zM691,820h1v1h-1zM700,820h1v1h-1zM709,820h1v1h-1zM718,820h1v1h-1zM727,820h1v1h-1zM736,820h1v1h-1zM745,820h1v1h-1zM754,820h1v1h-1zM763,820h1v1h-1zM772,820h1v1h-1zM781,820h1v1h-1zM790,820h1v1h-1zM799,820h1v1h-1zM808,820h1v1h-1zM817,820h1v1h-1zM826,820h1v1h-1zM834,820h1v1h-1zM843,820h1v1h-1zM852,820h1v1h-1zM861,820h1v1h-1zM870,820h1v1h-1zM879,820h1v1h-1zM888,820h1v1h-1zM897,820h1v1h-1zM906,820h1v1h-1zM915,820h1v1h-1zM924,820h1v1h-1zM933,820h1v1h-1zM942,820h1v1h-1zM951,820h1v1h-1zM960,820h1v1h-1zM969,820h1v1h-1zM978,820h1v1h-1zM986,820h1v1h-1zM1112,820h1v1h-1zM1121,820h1v1h-1zM1129,820h1v1h-1zM1138,820h1v1h-1zM1147,820h1v1h-1zM1156,820h1v1h-1zM1165,820h1v1h-1zM1174,820h1v1h-1zM1183,820h1v1h-1zM1192,820h1v1h-1zM1201,820h1v1h-1zM1210,820h1v1h-1zM1219,820h1v1h-1zM1228,820h1v1h-1zM1237,820h1v1h-1zM1246,820h1v1h-1zM1255,820h1v1h-1zM1264,820h1v1h-1zM1273,820h1v1h-1zM1281,820h1v1h-1zM1290,820h1v1h-1zM1299,820h1v1h-1zM1308,820h1v1h-1zM1317,820h1v1h-1zM1326,820h1v1h-1zM1335,820h1v1h-1zM1344,820h1v1h-1zM1353,820h1v1h-1zM1362,820h1v1h-1zM1371,820h1v1h-1zM705,824h1v1h-1zM714,824h1v1h-1zM723,824h1v1h-1zM732,824h1v1h-1zM741,824h1v1h-1zM750,824h1v1h-1zM758,824h1v1h-1zM767,824h1v1h-1zM776,824h1v1h-1zM785,824h1v1h-1zM794,824h1v1h-1zM803,824h1v1h-1zM812,824h1v1h-1zM821,824h1v1h-1zM830,824h1v1h-1zM839,824h1v1h-1zM848,824h1v1h-1zM857,824h1v1h-1zM866,824h1v1h-1zM875,824h1v1h-1zM884,824h1v1h-1zM893,824h1v1h-1zM902,824h1v1h-1zM910,824h1v1h-1zM919,824h1v1h-1zM928,824h1v1h-1zM937,824h1v1h-1zM946,824h1v1h-1zM955,824h1v1h-1zM964,824h1v1h-1zM973,824h1v1h-1zM982,824h1v1h-1zM991,824h1v1h-1zM1000,824h1v1h-1zM1009,824h1v1h-1zM1018,824h1v1h-1zM1089,824h1v1h-1zM1098,824h1v1h-1zM1107,824h1v1h-1zM1116,824h1v1h-1zM1125,824h1v1h-1zM1134,824h1v1h-1zM1143,824h1v1h-1zM1152,824h1v1h-1zM1161,824h1v1h-1zM1170,824h1v1h-1zM1179,824h1v1h-1zM1188,824h1v1h-1zM1197,824h1v1h-1zM1205,824h1v1h-1zM1214,824h1v1h-1zM1223,824h1v1h-1zM1232,824h1v1h-1zM1241,824h1v1h-1zM1250,824h1v1h-1zM1259,824h1v1h-1zM1268,824h1v1h-1zM1277,824h1v1h-1zM1286,824h1v1h-1zM1295,824h1v1h-1zM1304,824h1v1h-1zM1313,824h1v1h-1zM1322,824h1v1h-1zM1331,824h1v1h-1zM1340,824h1v1h-1zM1349,824h1v1h-1zM1357,824h1v1h-1zM1366,824h1v1h-1zM1375,824h1v1h-1zM736,829h1v1h-1zM745,829h1v1h-1zM754,829h1v1h-1zM763,829h1v1h-1zM772,829h1v1h-1zM781,829h1v1h-1zM790,829h1v1h-1zM799,829h1v1h-1zM808,829h1v1h-1zM817,829h1v1h-1zM826,829h1v1h-1zM834,829h1v1h-1zM843,829h1v1h-1zM852,829h1v1h-1zM861,829h1v1h-1zM870,829h1v1h-1zM879,829h1v1h-1zM888,829h1v1h-1zM897,829h1v1h-1zM906,829h1v1h-1zM915,829h1v1h-1zM924,829h1v1h-1zM933,829h1v1h-1zM942,829h1v1h-1zM951,829h1v1h-1zM960,829h1v1h-1zM969,829h1v1h-1zM978,829h1v1h-1zM986,829h1v1h-1zM995,829h1v1h-1zM1004,829h1v1h-1zM1013,829h1v1h-1zM1022,829h1v1h-1zM1031,829h1v1h-1zM1040,829h1v1h-1zM1076,829h1v1h-1zM1085,829h1v1h-1zM1094,829h1v1h-1zM1103,829h1v1h-1zM1112,829h1v1h-1zM1121,829h1v1h-1zM1129,829h1v1h-1zM1138,829h1v1h-1zM1147,829h1v1h-1zM1156,829h1v1h-1zM1165,829h1v1h-1zM1174,829h1v1h-1zM1183,829h1v1h-1zM1192,829h1v1h-1zM1201,829h1v1h-1zM1210,829h1v1h-1zM1219,829h1v1h-1zM1228,829h1v1h-1zM1237,829h1v1h-1zM1246,829h1v1h-1zM1255,829h1v1h-1zM1264,829h1v1h-1zM1273,829h1v1h-1zM1281,829h1v1h-1zM1290,829h1v1h-1zM1299,829h1v1h-1zM1308,829h1v1h-1zM1317,829h1v1h-1zM1326,829h1v1h-1zM1335,829h1v1h-1zM1344,829h1v1h-1zM1353,829h1v1h-1zM1362,829h1v1h-1zM1371,829h1v1h-1zM767,833h1v1h-1zM776,833h1v1h-1zM785,833h1v1h-1zM794,833h1v1h-1zM803,833h1v1h-1zM812,833h1v1h-1zM821,833h1v1h-1zM830,833h1v1h-1zM839,833h1v1h-1zM848,833h1v1h-1zM857,833h1v1h-1zM866,833h1v1h-1zM875,833h1v1h-1zM884,833h1v1h-1zM893,833h1v1h-1zM902,833h1v1h-1zM910,833h1v1h-1zM919,833h1v1h-1zM928,833h1v1h-1zM937,833h1v1h-1zM946,833h1v1h-1zM955,833h1v1h-1zM964,833h1v1h-1zM973,833h1v1h-1zM982,833h1v1h-1zM991,833h1v1h-1zM1000,833h1v1h-1zM1009,833h1v1h-1zM1018,833h1v1h-1zM1027,833h1v1h-1zM1036,833h1v1h-1zM1045,833h1v1h-1zM1053,833h1v1h-1zM1062,833h1v1h-1zM1071,833h1v1h-1zM1080,833h1v1h-1zM1089,833h1v1h-1zM1098,833h1v1h-1zM1107,833h1v1h-1zM1116,833h1v1h-1zM1125,833h1v1h-1zM1134,833h1v1h-1zM1143,833h1v1h-1zM1152,833h1v1h-1zM1161,833h1v1h-1zM1170,833h1v1h-1zM1179,833h1v1h-1zM1188,833h1v1h-1zM1197,833h1v1h-1zM1205,833h1v1h-1zM1214,833h1v1h-1zM1223,833h1v1h-1zM1232,833h1v1h-1zM1241,833h1v1h-1zM1250,833h1v1h-1zM1259,833h1v1h-1zM1268,833h1v1h-1zM1277,833h1v1h-1zM1286,833h1v1h-1zM1295,833h1v1h-1zM1304,833h1v1h-1zM1313,833h1v1h-1zM1322,833h1v1h-1zM1331,833h1v1h-1zM1340,833h1v1h-1zM1349,833h1v1h-1zM1357,833h1v1h-1zM1366,833h1v1h-1zM1375,833h1v1h-1zM817,837h1v1h-1zM826,837h1v1h-1zM834,837h1v1h-1zM843,837h1v1h-1zM852,837h1v1h-1zM861,837h1v1h-1zM870,837h1v1h-1zM879,837h1v1h-1zM888,837h1v1h-1zM897,837h1v1h-1zM906,837h1v1h-1zM915,837h1v1h-1zM924,837h1v1h-1zM933,837h1v1h-1zM942,837h1v1h-1zM951,837h1v1h-1zM960,837h1v1h-1zM969,837h1v1h-1zM978,837h1v1h-1zM986,837h1v1h-1zM995,837h1v1h-1zM1004,837h1v1h-1zM1013,837h1v1h-1zM1022,837h1v1h-1zM1031,837h1v1h-1zM1040,837h1v1h-1zM1049,837h1v1h-1zM1058,837h1v1h-1zM1067,837h1v1h-1zM1076,837h1v1h-1zM1085,837h1v1h-1zM1094,837h1v1h-1zM1103,837h1v1h-1zM1112,837h1v1h-1zM1121,837h1v1h-1zM1129,837h1v1h-1zM1138,837h1v1h-1zM1147,837h1v1h-1zM1156,837h1v1h-1zM1165,837h1v1h-1zM1174,837h1v1h-1zM1183,837h1v1h-1zM1192,837h1v1h-1zM1201,837h1v1h-1zM1210,837h1v1h-1zM1219,837h1v1h-1zM1228,837h1v1h-1zM1237,837h1v1h-1zM1246,837h1v1h-1zM1255,837h1v1h-1zM1264,837h1v1h-1zM1273,837h1v1h-1zM1281,837h1v1h-1zM1290,837h1v1h-1zM1299,837h1v1h-1zM1308,837h1v1h-1zM1317,837h1v1h-1zM1326,837h1v1h-1zM1335,837h1v1h-1zM893,842h1v1h-1zM902,842h1v1h-1zM910,842h1v1h-1zM919,842h1v1h-1zM928,842h1v1h-1zM937,842h1v1h-1zM946,842h1v1h-1zM955,842h1v1h-1zM964,842h1v1h-1zM973,842h1v1h-1zM982,842h1v1h-1zM991,842h1v1h-1zM1000,842h1v1h-1zM1009,842h1v1h-1zM1018,842h1v1h-1zM1027,842h1v1h-1zM1036,842h1v1h-1zM1045,842h1v1h-1zM1053,842h1v1h-1zM1062,842h1v1h-1zM1071,842h1v1h-1zM1080,842h1v1h-1zM1089,842h1v1h-1zM1098,842h1v1h-1zM1107,842h1v1h-1zM1116,842h1v1h-1zM1125,842h1v1h-1zM1134,842h1v1h-1zM1143,842h1v1h-1zM1152,842h1v1h-1zM1161,842h1v1h-1zM1170,842h1v1h-1zM1179,842h1v1h-1zM1188,842h1v1h-1zM1197,842h1v1h-1zM1205,842h1v1h-1zM1214,842h1v1h-1zM1223,842h1v1h-1zM1232,842h1v1h-1zM1241,842h1v1h-1zM1250,842h1v1h-1zM1259,842h1v1h-1zM951,846h1v1h-1zM960,846h1v1h-1zM969,846h1v1h-1zM978,846h1v1h-1zM986,846h1v1h-1zM995,846h1v1h-1zM1004,846h1v1h-1zM1013,846h1v1h-1zM1022,846h1v1h-1zM1031,846h1v1h-1zM1040,846h1v1h-1zM1049,846h1v1h-1zM1058,846h1v1h-1zM1067,846h1v1h-1zM1076,846h1v1h-1zM1085,846h1v1h-1zM1094,846h1v1h-1zM1103,846h1v1h-1zM1112,846h1v1h-1zM1121,846h1v1h-1zM1129,846h1v1h-1zM1138,846h1v1h-1zM1147,846h1v1h-1zM1156,846h1v1h-1zM1165,846h1v1h-1zM1174,846h1v1h-1zM1183,846h1v1h-1zM1192,846h1v1h-1zM991,851h1v1h-1zM1000,851h1v1h-1zM1009,851h1v1h-1zM1018,851h1v1h-1zM1027,851h1v1h-1zM1036,851h1v1h-1zM1045,851h1v1h-1zM1053,851h1v1h-1zM1062,851h1v1h-1zM1071,851h1v1h-1zM1080,851h1v1h-1zM1089,851h1v1h-1zM1098,851h1v1h-1zM1107,851h1v1h-1zM1116,851h1v1h-1zM1125,851h1v1h-1zM1134,851h1v1h-1z"/>
<path clip-path="url(#sparse)" fill="#a8a8a8" d="M477,757h1v1h-1zM477,775h1v1h-1zM495,775h1v1h-1zM513,775h1v1h-1zM477,793h1v1h-1zM495,793h1v1h-1zM513,793h1v1h-1zM531,793h1v1h-1zM548,793h1v1h-1zM477,811h1v1h-1zM495,811h1v1h-1zM513,811h1v1h-1zM531,811h1v1h-1zM548,811h1v1h-1zM566,811h1v1h-1zM584,811h1v1h-1zM602,811h1v1h-1zM477,829h1v1h-1zM495,829h1v1h-1zM513,829h1v1h-1zM531,829h1v1h-1zM548,829h1v1h-1zM566,829h1v1h-1zM584,829h1v1h-1zM602,829h1v1h-1zM620,829h1v1h-1zM638,829h1v1h-1zM656,829h1v1h-1zM674,829h1v1h-1zM691,829h1v1h-1zM709,829h1v1h-1zM727,829h1v1h-1zM477,846h1v1h-1zM495,846h1v1h-1zM513,846h1v1h-1zM531,846h1v1h-1zM548,846h1v1h-1zM566,846h1v1h-1zM584,846h1v1h-1zM602,846h1v1h-1zM620,846h1v1h-1zM638,846h1v1h-1zM656,846h1v1h-1zM674,846h1v1h-1zM691,846h1v1h-1zM709,846h1v1h-1zM727,846h1v1h-1zM745,846h1v1h-1zM763,846h1v1h-1zM781,846h1v1h-1zM799,846h1v1h-1zM817,846h1v1h-1zM835,846h1v1h-1zM852,846h1v1h-1zM870,846h1v1h-1zM888,846h1v1h-1zM906,846h1v1h-1zM924,846h1v1h-1zM942,846h1v1h-1zM1192,846h1v1h-1zM1210,846h1v1h-1zM1228,846h1v1h-1zM1246,846h1v1h-1zM1264,846h1v1h-1zM1282,846h1v1h-1zM1299,846h1v1h-1zM1317,846h1v1h-1zM1335,846h1v1h-1zM1353,846h1v1h-1zM1371,846h1v1h-1zM477,864h1v1h-1zM495,864h1v1h-1zM513,864h1v1h-1zM531,864h1v1h-1zM548,864h1v1h-1zM566,864h1v1h-1zM584,864h1v1h-1zM602,864h1v1h-1zM620,864h1v1h-1zM638,864h1v1h-1zM656,864h1v1h-1zM674,864h1v1h-1zM691,864h1v1h-1zM709,864h1v1h-1zM727,864h1v1h-1zM745,864h1v1h-1zM763,864h1v1h-1zM781,864h1v1h-1zM799,864h1v1h-1zM817,864h1v1h-1zM835,864h1v1h-1zM852,864h1v1h-1zM870,864h1v1h-1zM888,864h1v1h-1zM906,864h1v1h-1zM924,864h1v1h-1zM942,864h1v1h-1zM960,864h1v1h-1zM978,864h1v1h-1zM995,864h1v1h-1zM1013,864h1v1h-1zM1031,864h1v1h-1zM1049,864h1v1h-1zM1067,864h1v1h-1zM1085,864h1v1h-1zM1103,864h1v1h-1zM1121,864h1v1h-1zM1138,864h1v1h-1zM1156,864h1v1h-1zM1174,864h1v1h-1zM1192,864h1v1h-1zM1210,864h1v1h-1zM1228,864h1v1h-1zM1246,864h1v1h-1zM1264,864h1v1h-1zM1282,864h1v1h-1zM1299,864h1v1h-1zM1317,864h1v1h-1zM1335,864h1v1h-1zM1353,864h1v1h-1zM1371,864h1v1h-1zM477,882h1v1h-1zM495,882h1v1h-1zM513,882h1v1h-1zM531,882h1v1h-1zM548,882h1v1h-1zM566,882h1v1h-1zM584,882h1v1h-1zM602,882h1v1h-1zM620,882h1v1h-1zM638,882h1v1h-1zM656,882h1v1h-1zM674,882h1v1h-1zM691,882h1v1h-1zM709,882h1v1h-1zM727,882h1v1h-1zM745,882h1v1h-1zM763,882h1v1h-1zM781,882h1v1h-1zM799,882h1v1h-1zM817,882h1v1h-1zM835,882h1v1h-1zM852,882h1v1h-1zM870,882h1v1h-1zM888,882h1v1h-1zM906,882h1v1h-1zM924,882h1v1h-1zM942,882h1v1h-1zM960,882h1v1h-1zM978,882h1v1h-1zM995,882h1v1h-1zM1013,882h1v1h-1zM1031,882h1v1h-1zM1049,882h1v1h-1zM1067,882h1v1h-1zM1085,882h1v1h-1zM1103,882h1v1h-1zM1121,882h1v1h-1zM1138,882h1v1h-1zM1156,882h1v1h-1zM1174,882h1v1h-1zM1192,882h1v1h-1zM1210,882h1v1h-1zM1228,882h1v1h-1zM1246,882h1v1h-1zM1264,882h1v1h-1zM1282,882h1v1h-1zM1299,882h1v1h-1zM1317,882h1v1h-1zM1335,882h1v1h-1zM1353,882h1v1h-1zM1371,882h1v1h-1zM477,900h1v1h-1zM495,900h1v1h-1zM513,900h1v1h-1zM531,900h1v1h-1zM548,900h1v1h-1zM566,900h1v1h-1zM584,900h1v1h-1zM602,900h1v1h-1zM620,900h1v1h-1zM638,900h1v1h-1zM656,900h1v1h-1zM674,900h1v1h-1zM691,900h1v1h-1zM709,900h1v1h-1zM727,900h1v1h-1zM745,900h1v1h-1zM763,900h1v1h-1zM781,900h1v1h-1zM799,900h1v1h-1zM817,900h1v1h-1zM835,900h1v1h-1zM852,900h1v1h-1zM870,900h1v1h-1zM888,900h1v1h-1zM906,900h1v1h-1zM924,900h1v1h-1zM942,900h1v1h-1zM960,900h1v1h-1zM978,900h1v1h-1zM995,900h1v1h-1zM1013,900h1v1h-1zM1031,900h1v1h-1zM1049,900h1v1h-1zM1067,900h1v1h-1zM1085,900h1v1h-1zM1103,900h1v1h-1zM1121,900h1v1h-1zM1138,900h1v1h-1zM1156,900h1v1h-1zM1174,900h1v1h-1zM1192,900h1v1h-1zM1210,900h1v1h-1zM1228,900h1v1h-1zM1246,900h1v1h-1zM1264,900h1v1h-1zM1282,900h1v1h-1zM1299,900h1v1h-1zM1317,900h1v1h-1zM1335,900h1v1h-1zM1353,900h1v1h-1zM1371,900h1v1h-1z"/>
<line x1="469" y1="855.7" x2="1376" y2="855.7" stroke="#b4b4b4" stroke-width="1.5" />
<line x1="469" y1="873.6" x2="1376" y2="873.6" stroke="#b4b4b4" stroke-width="1.5" />
<line x1="469" y1="891.5" x2="1376" y2="891.5" stroke="#b4b4b4" stroke-width="1.5" />
<line x1="469" y1="909.3" x2="1376" y2="909.3" stroke="#b4b4b4" stroke-width="1.5" />
<line x1="469" y1="837.6" x2="790" y2="837.6" stroke="#b4b4b4" stroke-width="1.5" />
<line x1="469" y1="765.5" x2="510" y2="765.5" stroke="#b4b4b4" stroke-width="1.5" />
<line x1="469" y1="783.4" x2="535" y2="783.4" stroke="#b4b4b4" stroke-width="1.5" />
<line x1="469" y1="801.8" x2="575" y2="801.8" stroke="#b4b4b4" stroke-width="1.5" />
<line x1="469" y1="819.8" x2="700" y2="819.8" stroke="#b4b4b4" stroke-width="1.5" />
<line x1="1266" y1="801.7" x2="1376" y2="801.7" stroke="#b4b4b4" stroke-width="1.5" />
<line x1="1190" y1="819.7" x2="1376" y2="819.7" stroke="#b4b4b4" stroke-width="1.5" />
<polyline points="469,747 556.7,793.6 575,801" fill="none" stroke="#b4b4b4" stroke-width="1.2" />
<polyline points="620,812 780,834.3 935,844.2 1020,852.9" fill="none" stroke="#b4b4b4" stroke-width="1.2" />
<polyline points="1031,852 1135,850.4 1245,842 1376,834" fill="none" stroke="#b4b4b4" stroke-width="1.2" />
<polyline points="1135.5,811.1 1255,832.5 1376,834.5" fill="none" stroke="#b4b4b4" stroke-width="1.2" />
<polyline points="1264,796 1376,807.3" fill="none" stroke="#b4b4b4" stroke-width="1.2" />
<polyline points="1326,916 1376,901.7" fill="none" stroke="#b4b4b4" stroke-width="1.2" />
<polyline points="469,727.5 511.5,734 573.8,751.7 635.7,767.5 764.2,792.7 885,802.3 1020.4,822.8 1059,830.6 1135.5,811.1 1264,795.3 1376,779.6" fill="none" stroke="#f2f2f2" stroke-width="1.8" />
<polyline points="469,730 511.5,735.5" fill="none" stroke="#f2f2f2" stroke-width="1" />
<line x1="511.4" y1="734" x2="511.4" y2="916" stroke="#0000ff" stroke-width="1.4" />
<line x1="636" y1="767.5" x2="636" y2="916" stroke="#0000ff" stroke-width="1.4" />
<line x1="885" y1="802.3" x2="885" y2="916" stroke="#0000ff" stroke-width="1.4" />
<line x1="1009.6" y1="821" x2="1009.6" y2="916" stroke="#0000ff" stroke-width="1.4" />
<line x1="1136" y1="811.1" x2="1136" y2="916" stroke="#0000ff" stroke-width="1.4" />
<line x1="1258" y1="797" x2="1258" y2="916" stroke="#0000ff" stroke-width="1.4" />
<line x1="469" y1="724.3" x2="559" y2="724.3" stroke="#0000ff" stroke-width="1.7" />
<line x1="598" y1="724.3" x2="1376" y2="724.3" stroke="#0000ff" stroke-width="1.7" />
<path d="M469,758.2 C495.0,765.2 574.0,788.4 625,800.2 C676.0,812.0 723.3,820.9 775,829.1 C826.7,837.3 896.0,844.4 935,849.5 C974.0,854.6 983.2,857.6 1009,859.5 C1034.8,861.4 1069.0,861.3 1090,860.8 C1111.0,860.3 1110.7,859.3 1135,856.7 C1159.3,854.1 1195.8,849.5 1236,845.2 C1276.2,840.9 1352.7,833.4 1376,831" fill="none" stroke="#0000ff" stroke-width="2.2" />
<path d="M469,775 C495.0,782.2 574.0,806.6 625,818.5 C676.0,830.4 723.3,838.0 775,846.2 C826.7,854.5 896.0,862.9 935,868 C974.0,873.1 983.2,875.2 1009,877 C1034.8,878.8 1052.2,880.6 1090,878.5 C1127.8,876.4 1188.3,869.1 1236,864.1 C1283.7,859.1 1352.7,850.9 1376,848.3" fill="none" stroke="#0000ff" stroke-width="2.2" />
<path d="M469,760.2 C495.0,768.0 573.2,794.7 625,806.7 C676.8,818.7 728.3,824.8 780,832.3 C831.7,839.8 883.3,846.6 935,851.6 C986.7,856.6 1039.8,862.5 1090,862 C1140.2,861.5 1188.3,853.1 1236,848.3 C1283.7,843.5 1352.7,835.5 1376,833" fill="none" stroke="#f2f2f2" stroke-width="1.8" />
<path d="M469,766.8 C495.0,774.8 573.2,802.6 625,814.6 C676.8,826.6 728.3,831.6 780,838.9 C831.7,846.2 883.3,853.2 935,858.2 C986.7,863.2 1039.8,869.1 1090,868.6 C1140.2,868.1 1188.3,859.8 1236,855 C1283.7,850.2 1352.7,842.2 1376,839.7" fill="none" stroke="#f2f2f2" stroke-width="1.8" />
<path d="M469,774 C495.0,781.2 573.2,805.1 625,817 C676.8,828.9 728.3,837.4 780,845.4 C831.7,853.4 883.3,859.6 935,864.7 C986.7,869.8 1039.8,876.2 1090,875.8 C1140.2,875.3 1188.3,866.9 1236,862 C1283.7,857.1 1352.7,848.9 1376,846.3" fill="none" stroke="#f2f2f2" stroke-width="1.8" />
<line x1="706.8" y1="820" x2="706.8" y2="832" stroke="#f2f2f2" stroke-width="1.5" />
<line x1="821" y1="838" x2="821" y2="850" stroke="#f2f2f2" stroke-width="1.5" />
<line x1="972.6" y1="858" x2="972.6" y2="870" stroke="#f2f2f2" stroke-width="1.5" />
<line x1="1145.5" y1="859" x2="1145.5" y2="871" stroke="#f2f2f2" stroke-width="1.5" />
<line x1="1345" y1="836" x2="1345" y2="849" stroke="#f2f2f2" stroke-width="1.5" />
<polyline points="469,750.2 625,788.3000000000001 780,817.8000000000001 935,834.3000000000001 1059,854.8000000000001 1085,849.6 1245,821.5 1376,804.8000000000001" fill="none" stroke="#ff0000" stroke-width="1.6" stroke-dasharray="12 6"/>
<polyline points="469,753.0 625,791.1 780,820.6 935,837.1 1059,857.6 1085,852.4 1245,824.3 1376,807.6" fill="none" stroke="#ff0000" stroke-width="1.6" stroke-dasharray="12 6" stroke-dashoffset="9"/>
<polyline points="469,851.5 675,899.4 756.5,916" fill="none" stroke="#ff0000" stroke-width="2.2" stroke-dasharray="10 6"/>
<polyline points="1290,916 1376,904.8" fill="none" stroke="#ff0000" stroke-width="2.2" stroke-dasharray="10 6"/>
<rect x="573.7" y="750" width="9.899999999999977" height="166" fill="#1f2022" />
<line x1="573.7" y1="750" x2="573.7" y2="916" stroke="#f2f2f2" stroke-width="1.6" stroke-dasharray="9 4"/>
<line x1="583.6" y1="750" x2="583.6" y2="916" stroke="#f2f2f2" stroke-width="1.6" stroke-dasharray="9 4"/>
<line x1="567.7" y1="750" x2="589.6" y2="750" stroke="#9a9a9a" stroke-width="1.2" />
<rect x="1021" y="823.4" width="10.200000000000045" height="92.60000000000002" fill="#1f2022" />
<line x1="1021" y1="823.4" x2="1021" y2="916" stroke="#f2f2f2" stroke-width="1.6" stroke-dasharray="9 4"/>
<line x1="1031.2" y1="823.4" x2="1031.2" y2="916" stroke="#f2f2f2" stroke-width="1.6" stroke-dasharray="9 4"/>
<line x1="1015" y1="823.4" x2="1037.2" y2="823.4" stroke="#9a9a9a" stroke-width="1.2" />
<line x1="1264.3" y1="796" x2="1264.3" y2="916" stroke="#f2f2f2" stroke-width="1.8" />
<line x1="1333.2" y1="636.3" x2="1333.2" y2="755.5" stroke="#f2f2f2" stroke-width="1.5" />
<line x1="1333.2" y1="636.3" x2="1376" y2="636.3" stroke="#f2f2f2" stroke-width="1.5" />
<text x="0" y="0" font-size="13.86" fill="#f2f2f2" font-family="Liberation Sans" font-style="italic" textLength="39" lengthAdjust="spacingAndGlyphs" transform="translate(1334.5,633.7) scale(1,1.3)">Кожух</text>
<path d="M1158.5,722 V498.7 H1226" stroke="#0000ff" stroke-width="2" fill="none"/>
<path d="M1155.2,704 H1161.8 L1158.5,723 Z" fill="#0000ff"/>
<text x="0" y="0" font-size="17.89" fill="#0000ff" font-family="Liberation Sans" font-style="italic" textLength="64" lengthAdjust="spacingAndGlyphs" transform="translate(1163,497) scale(1,1.3)">ГВ 42.32</text>
<rect x="559" y="714.4" width="39" height="16" fill="#2c2d2f" />
<text x="0" y="0" font-size="12.08" fill="#d8d8d8" font-family="Liberation Sans" font-style="italic" textLength="41" lengthAdjust="spacingAndGlyphs" transform="translate(558,709.5) scale(1,1.3)">бур.1651</text>
<line x1="556" y1="711.5" x2="598" y2="711.5" stroke="#d8d8d8" stroke-width="1.4" />
<text x="0" y="0" font-size="11.40" fill="#d0d0d0" font-family="Liberation Sans" font-style="italic" textLength="24.3" lengthAdjust="spacingAndGlyphs" transform="translate(566,726.6) scale(1,1.3)">41.24</text>
<rect x="1006" y="787" width="40" height="16" fill="#2c2d2f" />
<text x="0" y="0" font-size="12.08" fill="#d8d8d8" font-family="Liberation Sans" font-style="italic" textLength="42.6" lengthAdjust="spacingAndGlyphs" transform="translate(1004.4,781.9) scale(1,1.3)">бур.1652</text>
<line x1="1003" y1="783.5" x2="1047" y2="783.5" stroke="#d8d8d8" stroke-width="1.4" />
<text x="0" y="0" font-size="11.40" fill="#d0d0d0" font-family="Liberation Sans" font-style="italic" textLength="26.4" lengthAdjust="spacingAndGlyphs" transform="translate(1012.6,798) scale(1,1.3)">38.36</text>
<text x="0" y="0" font-size="10.62" fill="#bdbdbd" font-family="Liberation Sans" font-style="italic" textLength="9" lengthAdjust="spacingAndGlyphs" transform="translate(598,800) scale(1,1.3)">2.1</text>
<text x="0" y="0" font-size="12.30" fill="#bdbdbd" font-family="Liberation Sans" font-style="italic" textLength="12" lengthAdjust="spacingAndGlyphs" transform="translate(1040,850) scale(1,1.3)">1.2</text>
<path d="M517.7,795.2 L525.4,823.1 H510 Z" fill="none" stroke="#f2f2f2" stroke-width="1.5"/>
<line x1="517.7" y1="823.1" x2="517.7" y2="895.4" stroke="#f2f2f2" stroke-width="1.5" />
<rect x="506.5" y="895.4" width="22.8" height="30" fill="none" stroke="#f2f2f2" stroke-width="1.5"/>
<line x1="529.3" y1="907.2" x2="601.7" y2="907.2" stroke="#f2f2f2" stroke-width="1.5" />
<path d="M629.2,907.2 L601.7,899 V915.5 Z" fill="none" stroke="#f2f2f2" stroke-width="1.5"/>
<path d="M645.5,901 L658,913 M658,901 L645.5,913" stroke="#f2f2f2" stroke-width="1.5"/>
<path d="M512,767 L518,773 L524,767 M518,773 V779" stroke="#f2f2f2" stroke-width="1.4" fill="none"/>
</g>
</g>
<rect x="476" y="181" width="27.69999999999999" height="16" rx="3" fill="#4b4c4e" fill-opacity="0.92"/>
<text x="484.5" y="193.2" font-size="11.5" fill="#9c9c9c" font-family="Liberation Sans" textLength="11.38" lengthAdjust="spacingAndGlyphs" >+</text>
<rect x="505.7" y="181" width="56.80000000000001" height="16" rx="3" fill="#4b4c4e" fill-opacity="0.92"/>
<text x="514.5" y="193.2" font-size="11.5" fill="#9c9c9c" font-family="Liberation Sans" textLength="38.52" lengthAdjust="spacingAndGlyphs" >Сверху</text>
<rect x="565" y="181" width="71.70000000000005" height="16" rx="3" fill="#4b4c4e" fill-opacity="0.92"/>
<text x="575.5" y="193.2" font-size="11.5" fill="#9c9c9c" font-family="Liberation Sans" textLength="52.02" lengthAdjust="spacingAndGlyphs" >2D-каркас</text>
<rect x="639" y="181" width="158" height="16" rx="3" fill="#4b4c4e" fill-opacity="0.92"/>
<text x="647.5" y="193.2" font-size="11.5" fill="#9c9c9c" font-family="Liberation Sans" textLength="141.03" lengthAdjust="spacingAndGlyphs" >--- нет связанных видов ---</text>
<path d="M813,217.5 H1376 V298.7 H813 Q810,298.7 810,295.7 V220.5 Q810,217.5 813,217.5 Z" fill="#f0f0f0"/>
<text x="817.0" y="236" font-size="12.5" fill="#9a9a9a" font-family="Liberation Sans" textLength="407.02" lengthAdjust="spacingAndGlyphs" >Инструменты редактирования разреза - ПК480+0.00 - ПК503+99.86 (k=0)</text>
<line x1="810" y1="247.5" x2="1376" y2="247.5" stroke="#a8a8a8" stroke-width="1" />
<line x1="810" y1="276.5" x2="1376" y2="276.5" stroke="#a8a8a8" stroke-width="1" />
<line x1="810" y1="281.5" x2="1376" y2="281.5" stroke="#a8a8a8" stroke-width="1" />
<line x1="1230.5" y1="282" x2="1230.5" y2="298" stroke="#a8a8a8" stroke-width="1" />
<text x="863.0" y="293.4" font-size="11.5" fill="#000000" font-family="Liberation Sans" textLength="312.01" lengthAdjust="spacingAndGlyphs" >Выберите команду в наборе инструментов редактирования:</text>
<text x="1315.0" y="293.4" font-size="11.5" fill="#000000" font-family="Liberation Sans" textLength="62.0" lengthAdjust="spacingAndGlyphs" >Построить/</text>
<path d="M819,257 H826 L828,259 H835 V270 H819 Z" fill="#b8b8b8"/><path d="M820,265 h10" stroke="#e0e0e0" stroke-width="1"/>
<path d="M851,269 L858,259 L865,269 Z" fill="#909090" stroke="#000" stroke-width="1"/>
<path d="M850,262 L858,256 L866,262" stroke="#f00" stroke-width="1" fill="none"/>
<path d="M874,269 L881,259 L888,269 Z" fill="#909090" stroke="#000" stroke-width="1"/>
<path d="M876,256 V271 M886,256 V271" stroke="#f00" stroke-width="1.2"/>
<defs><clipPath id="pb0"><path d="M904.5,259 Q907,255 910,258 L918.5,262 V269 Q916,271 912,267 L904.5,265 Z"/></clipPath></defs>
<path d="M904.5,259 Q907,255 910,258 L918.5,262 V269 Q916,271 912,267 L904.5,265 Z" transform="translate(1.2,1.2)" fill="#000" opacity="0.55"/>
<path d="M904.5,259 Q907,255 910,258 L918.5,262 V269 Q916,271 912,267 L904.5,265 Z" fill="#0000f0"/>
<g clip-path="url(#pb0)"><path d="M910,255 L920,260 V272 H915 Z" fill="#fff"/></g>
<path d="M904.5,259 Q907,255 910,258 L918.5,262 V269 Q916,271 912,267 L904.5,265 Z" fill="none" stroke="#000" stroke-width="1"/>
<defs><clipPath id="pb1"><path d="M927.5,259 Q930,255 933,258 L941.5,262 V269 Q939,271 935,267 L927.5,265 Z"/></clipPath></defs>
<path d="M927.5,259 Q930,255 933,258 L941.5,262 V269 Q939,271 935,267 L927.5,265 Z" transform="translate(1.2,1.2)" fill="#000" opacity="0.55"/>
<path d="M927.5,259 Q930,255 933,258 L941.5,262 V269 Q939,271 935,267 L927.5,265 Z" fill="#0000f0"/>
<g clip-path="url(#pb1)"><path d="M931,256 H937 L939,272 H933 Z" fill="#fff"/></g>
<path d="M935,258 V268 M933,260 L935,258 L937,260 M933,266 L935,268 L937,266" stroke="#ff0000" stroke-width="1.1" fill="none"/>
<path d="M927.5,259 Q930,255 933,258 L941.5,262 V269 Q939,271 935,267 L927.5,265 Z" fill="none" stroke="#000" stroke-width="1"/>
<defs><clipPath id="pb2"><path d="M950.5,259 Q953,255 956,258 L964.5,262 V269 Q962,271 958,267 L950.5,265 Z"/></clipPath></defs>
<path d="M950.5,259 Q953,255 956,258 L964.5,262 V269 Q962,271 958,267 L950.5,265 Z" transform="translate(1.2,1.2)" fill="#000" opacity="0.55"/>
<path d="M950.5,259 Q953,255 956,258 L964.5,262 V269 Q962,271 958,267 L950.5,265 Z" fill="#0000f0"/>
<g clip-path="url(#pb2)"><path d="M954,256 H960 L962,272 H956 Z" fill="#fff"/></g>
<path d="M953,263 H963 M955,261 L953,263 L955,265 M961,261 L963,263 L961,265" stroke="#ff0000" stroke-width="1.1" fill="none"/>
<path d="M950.5,259 Q953,255 956,258 L964.5,262 V269 Q962,271 958,267 L950.5,265 Z" fill="none" stroke="#000" stroke-width="1"/>
<defs><clipPath id="pb3"><path d="M973.5,259 Q976,255 979,258 L987.5,262 V269 Q985,271 981,267 L973.5,265 Z"/></clipPath></defs>
<path d="M973.5,259 Q976,255 979,258 L987.5,262 V269 Q985,271 981,267 L973.5,265 Z" transform="translate(1.2,1.2)" fill="#000" opacity="0.55"/>
<path d="M973.5,259 Q976,255 979,258 L987.5,262 V269 Q985,271 981,267 L973.5,265 Z" fill="#0000f0"/>
<g clip-path="url(#pb3)"><rect x="973" y="255" width="16" height="7" fill="#fff"/></g>
<path d="M973.5,259 Q976,255 979,258 L987.5,262 V269 Q985,271 981,267 L973.5,265 Z" fill="none" stroke="#000" stroke-width="1"/>
<defs><clipPath id="pb4"><path d="M996.5,259 Q999,255 1002,258 L1010.5,262 V269 Q1008,271 1004,267 L996.5,265 Z"/></clipPath></defs>
<path d="M996.5,259 Q999,255 1002,258 L1010.5,262 V269 Q1008,271 1004,267 L996.5,265 Z" transform="translate(1.2,1.2)" fill="#000" opacity="0.55"/>
<path d="M996.5,259 Q999,255 1002,258 L1010.5,262 V269 Q1008,271 1004,267 L996.5,265 Z" fill="#0000f0"/>
<g clip-path="url(#pb4)"><rect x="996" y="255" width="16" height="17" fill="#fff"/><path d="M996,262 Q1000,259 1004,263 T1012,265" stroke="#0000f0" stroke-width="1.6" fill="none"/></g>
<path d="M996.5,259 Q999,255 1002,258 L1010.5,262 V269 Q1008,271 1004,267 L996.5,265 Z" fill="none" stroke="#000" stroke-width="1"/>
<defs><clipPath id="pb5"><path d="M1027.5,259 Q1030,255 1033,258 L1041.5,262 V269 Q1039,271 1035,267 L1027.5,265 Z"/></clipPath></defs>
<path d="M1027.5,259 Q1030,255 1033,258 L1041.5,262 V269 Q1039,271 1035,267 L1027.5,265 Z" transform="translate(1.2,1.2)" fill="#000" opacity="0.55"/>
<path d="M1027.5,259 Q1030,255 1033,258 L1041.5,262 V269 Q1039,271 1035,267 L1027.5,265 Z" fill="#0000f0"/>
<g clip-path="url(#pb5)"><path d="M1031,256 H1037 L1039,272 H1033 Z" fill="#fff"/></g>
<path d="M1035,260 V267 M1031.5,263.5 H1038.5" stroke="#ff0000" stroke-width="2"/>
<path d="M1027.5,259 Q1030,255 1033,258 L1041.5,262 V269 Q1039,271 1035,267 L1027.5,265 Z" fill="none" stroke="#000" stroke-width="1"/>
<defs><clipPath id="pb6"><path d="M1050.5,259 Q1053,255 1056,258 L1064.5,262 V269 Q1062,271 1058,267 L1050.5,265 Z"/></clipPath></defs>
<path d="M1050.5,259 Q1053,255 1056,258 L1064.5,262 V269 Q1062,271 1058,267 L1050.5,265 Z" transform="translate(1.2,1.2)" fill="#000" opacity="0.55"/>
<path d="M1050.5,259 Q1053,255 1056,258 L1064.5,262 V269 Q1062,271 1058,267 L1050.5,265 Z" fill="#0000f0"/>
<g clip-path="url(#pb6)"><path d="M1054,256 H1060 L1062,272 H1056 Z" fill="#fff"/></g>
<path d="M1054.5,263.5 H1061.5" stroke="#ff0000" stroke-width="2"/>
<path d="M1050.5,259 Q1053,255 1056,258 L1064.5,262 V269 Q1062,271 1058,267 L1050.5,265 Z" fill="none" stroke="#000" stroke-width="1"/>
<defs><clipPath id="pb7"><path d="M1081.5,259 Q1084,255 1087,258 L1095.5,262 V269 Q1093,271 1089,267 L1081.5,265 Z"/></clipPath></defs>
<path d="M1081.5,259 Q1084,255 1087,258 L1095.5,262 V269 Q1093,271 1089,267 L1081.5,265 Z" transform="translate(1.2,1.2)" fill="#000" opacity="0.55"/>
<path d="M1081.5,259 Q1084,255 1087,258 L1095.5,262 V269 Q1093,271 1089,267 L1081.5,265 Z" fill="#c86010"/><g clip-path="url(#pb7)"><path d="M1081,264 l8,-9 M1084,268 l10,-11 M1088,270 l9,-10 M1092,271 l6,-7" stroke="#e8e060" stroke-width="1.6"/></g>
<path d="M1081.5,259 Q1084,255 1087,258 L1095.5,262 V269 Q1093,271 1089,267 L1081.5,265 Z" fill="none" stroke="#000" stroke-width="1"/>
<text x="1112.5" y="264.5" font-size="9" font-weight="bold" fill="#ff0000" stroke="#fff" stroke-width="2.2" paint-order="stroke" font-family="Liberation Sans" textLength="14" lengthAdjust="spacingAndGlyphs">ИГЭ</text>
<path d="M1125.5,266.5 H1114 L1117.5,270" stroke="#000" stroke-width="1.1" fill="none"/>
<text x="1136.5" y="264.5" font-size="9" font-weight="bold" fill="#ff0000" stroke="#fff" stroke-width="2.2" paint-order="stroke" font-family="Liberation Sans" textLength="14" lengthAdjust="spacingAndGlyphs">ЭSA</text>
<path d="M1149.5,266.5 H1138 L1141.5,270" stroke="#000" stroke-width="1.1" fill="none"/>
<text x="1159.0" y="264.5" font-size="9" font-weight="bold" fill="#ff0000" stroke="#fff" stroke-width="2.2" paint-order="stroke" font-family="Liberation Sans" textLength="14" lengthAdjust="spacingAndGlyphs">LgII</text>
<path d="M1172.0,266.5 H1160.5 L1164.0,270" stroke="#000" stroke-width="1.1" fill="none"/>
<text x="1183.5" y="264.5" font-size="9" font-weight="bold" fill="#ff0000" stroke="#fff" stroke-width="2.2" paint-order="stroke" font-family="Liberation Sans" textLength="14" lengthAdjust="spacingAndGlyphs">OO</text>
<path d="M1196.5,266.5 H1185 L1188.5,270" stroke="#000" stroke-width="1.1" fill="none"/>
<text x="1206.5" y="264.5" font-size="9" font-weight="bold" fill="#ff0000" stroke="#fff" stroke-width="2.2" paint-order="stroke" font-family="Liberation Sans" textLength="14" lengthAdjust="spacingAndGlyphs">OBB</text>
<path d="M1219.5,266.5 H1208 L1211.5,270" stroke="#000" stroke-width="1.1" fill="none"/>
<path d="M1231.5,260.5 L1235,256 L1238.5,260.5 Z" fill="#fff" stroke="#f00" stroke-width="1"/><path d="M1228,262 h14" stroke="#000" stroke-width="1"/><path d="M1228,264.5 h5 M1228,267 h5 M1228,269.5 h5 M1236,264 v6 M1239,264 v6 M1242,264 v6" stroke="#f00" stroke-width="1.2"/>
<path d="M1253,266.5 h12 M1255,261.5 h8" stroke="#b0b0b0" stroke-width="1"/><rect x="1260" y="261" width="4" height="4" fill="none" stroke="#b0b0b0" stroke-width="0.8"/><path d="M1251,256 L1265,270" stroke="#f00" stroke-width="2.2"/>
<path d="M1352.5,266.5 h12 M1354.5,261.5 h8" stroke="#b0b0b0" stroke-width="1"/><rect x="1359.5" y="261" width="4" height="4" fill="none" stroke="#b0b0b0" stroke-width="0.8"/><path d="M1350.5,256 L1364.5,270" stroke="#f00" stroke-width="2.2"/>
<path d="M1284,257.5 H1296 L1290,263.5 Z" fill="#0000f0" stroke="#000" stroke-width="1"/>
<path d="M1282,265 h15" stroke="#10e8f0" stroke-width="2"/><path d="M1283,266.5 h14" stroke="#888" stroke-width="0.8" stroke-dasharray="3 2"/>
<path d="M1307,257.5 H1319 L1313,263.5 Z" fill="#0000f0" stroke="#000" stroke-width="1"/>
<path d="M1309.5,259.2 H1316.5 L1313,262.5 Z" fill="#f00"/>
<path d="M1305,265 h15" stroke="#10e8f0" stroke-width="2"/><path d="M1306,266.5 h14" stroke="#888" stroke-width="0.8" stroke-dasharray="3 2"/>
<path d="M1329,257.5 H1341 L1335,263.5 Z" fill="#f0f0f0" stroke="#000" stroke-width="1"/>
<path d="M1327,265 h15" stroke="#10e8f0" stroke-width="2"/><path d="M1328,266.5 h14" stroke="#888" stroke-width="0.8" stroke-dasharray="3 2"/>
<rect x="118.7" y="417.2" width="183.3" height="19.7" fill="#a6a6a6" />
<line x1="18" y1="187.5" x2="24" y2="187.5" stroke="#808080" stroke-width="1" stroke-dasharray="1 1"/>
<line x1="33" y1="207.5" x2="43" y2="207.5" stroke="#808080" stroke-width="1" stroke-dasharray="1 1"/>
<line x1="33" y1="227.5" x2="43" y2="227.5" stroke="#808080" stroke-width="1" stroke-dasharray="1 1"/>
<line x1="33" y1="247.5" x2="43" y2="247.5" stroke="#808080" stroke-width="1" stroke-dasharray="1 1"/>
<line x1="33" y1="267.5" x2="43" y2="267.5" stroke="#808080" stroke-width="1" stroke-dasharray="1 1"/>
<line x1="33" y1="287.5" x2="43" y2="287.5" stroke="#808080" stroke-width="1" stroke-dasharray="1 1"/>
<line x1="52" y1="307.5" x2="62" y2="307.5" stroke="#808080" stroke-width="1" stroke-dasharray="1 1"/>
<line x1="71" y1="327.5" x2="81" y2="327.5" stroke="#808080" stroke-width="1" stroke-dasharray="1 1"/>
<line x1="71" y1="347.5" x2="81" y2="347.5" stroke="#808080" stroke-width="1" stroke-dasharray="1 1"/>
<line x1="71" y1="367.5" x2="81" y2="367.5" stroke="#808080" stroke-width="1" stroke-dasharray="1 1"/>
<line x1="71" y1="387.5" x2="81" y2="387.5" stroke="#808080" stroke-width="1" stroke-dasharray="1 1"/>
<line x1="71" y1="407.5" x2="81" y2="407.5" stroke="#808080" stroke-width="1" stroke-dasharray="1 1"/>
<line x1="90" y1="427.5" x2="100" y2="427.5" stroke="#808080" stroke-width="1" stroke-dasharray="1 1"/>
<line x1="109" y1="447.5" x2="119" y2="447.5" stroke="#808080" stroke-width="1" stroke-dasharray="1 1"/>
<line x1="109" y1="467.5" x2="119" y2="467.5" stroke="#808080" stroke-width="1" stroke-dasharray="1 1"/>
<line x1="109" y1="487.5" x2="119" y2="487.5" stroke="#808080" stroke-width="1" stroke-dasharray="1 1"/>
<line x1="109" y1="507.5" x2="119" y2="507.5" stroke="#808080" stroke-width="1" stroke-dasharray="1 1"/>
<line x1="71" y1="527.5" x2="81" y2="527.5" stroke="#808080" stroke-width="1" stroke-dasharray="1 1"/>
<line x1="33" y1="547.5" x2="43" y2="547.5" stroke="#808080" stroke-width="1" stroke-dasharray="1 1"/>
<line x1="32.5" y1="194" x2="32.5" y2="547.5" stroke="#808080" stroke-width="1" stroke-dasharray="1 1"/>
<line x1="51.5" y1="294" x2="51.5" y2="307.5" stroke="#808080" stroke-width="1" stroke-dasharray="1 1"/>
<line x1="70.5" y1="314" x2="70.5" y2="527.5" stroke="#808080" stroke-width="1" stroke-dasharray="1 1"/>
<line x1="89.5" y1="414" x2="89.5" y2="427.5" stroke="#808080" stroke-width="1" stroke-dasharray="1 1"/>
<line x1="108.5" y1="434" x2="108.5" y2="507.5" stroke="#808080" stroke-width="1" stroke-dasharray="1 1"/>
<rect x="9.5" y="183.5" width="8" height="8" fill="#f4f4f4" stroke="#9a9a9a" stroke-width="1"/>
<path d="M11.5,187.5 h4" stroke="#30407a" stroke-width="1"/>
<path d="M24.5,180.0 H35.5 L39.5,184.0 V192.0 H24.5 Z" fill="#e4e6ee" stroke="#222" stroke-width="1"/><path d="M35.5,180.0 V184.0 H39.5" fill="#fff" stroke="#444" stroke-width="0.8"/>
<text x="44.0" y="190.5" font-size="12" fill="#000000" font-family="Liberation Sans" textLength="212.02" lengthAdjust="spacingAndGlyphs" >нефтепровод магистральный_530мм</text>
<rect x="42.5" y="201.0" width="15" height="13" fill="#f4f4f4" stroke="#555" stroke-width="1"/><rect x="44" y="199.5" width="13" height="2" fill="#1010ff"/><path d="M44.5,205.0 H49 L50,206.0 H54 V211.0 H44.5 Z" fill="#e8e010" stroke="#222" stroke-width="0.9"/><path d="M44.5,211.0 L47,207.5 H55 L53,211.0 Z" fill="#a0a000" stroke="#222" stroke-width="0.8"/><line x1="57" y1="200.5" x2="57" y2="213.5" stroke="#ff0000" stroke-width="1.4" stroke-dasharray="1.2 0.8"/>
<text x="63.0" y="210.5" font-size="12" fill="#000000" font-family="Liberation Sans" textLength="49.09" lengthAdjust="spacingAndGlyphs" >GeoDW+</text>
<rect x="28.5" y="223.5" width="8" height="8" fill="#f4f4f4" stroke="#9a9a9a" stroke-width="1"/>
<path d="M30.5,227.5 h4" stroke="#30407a" stroke-width="1"/>
<path d="M32.5,225.5 v4" stroke="#30407a" stroke-width="1"/>
<path d="M43,222.5 H48 L49,223.5 H55 V232.5 H43 Z" fill="#dedede" stroke="#b8b8b8" stroke-width="1"/><path d="M44,231.5 L53,226.5" stroke="#b0b0b0" stroke-width="0.8"/><path d="M55,219.5 H59 V233.5 L57,235.5 L55,233.5 Z" fill="#000" stroke="#fff" stroke-width="0.7"/>
<text x="63.0" y="230.5" font-size="12" fill="#000000" font-family="Liberation Sans" textLength="125.03" lengthAdjust="spacingAndGlyphs" >Свободные скважины</text>
<rect x="28.5" y="243.5" width="8" height="8" fill="#f4f4f4" stroke="#9a9a9a" stroke-width="1"/>
<path d="M30.5,247.5 h4" stroke="#30407a" stroke-width="1"/>
<path d="M32.5,245.5 v4" stroke="#30407a" stroke-width="1"/>
<rect x="43" y="240.5" width="10" height="10" fill="#dcdcdc" stroke="#b8b8b8"/><rect x="47.5" y="245.0" width="11" height="10" fill="#f6f6f6" stroke="#9a9a9a"/><path d="M49,248.0 h2 M49,252.0 h2" stroke="#2020c0" stroke-width="1"/><path d="M53,245.5 v9" stroke="#20b0f0" stroke-width="1.6" stroke-dasharray="1.5 1"/>
<text x="63.0" y="250.5" font-size="12" fill="#000000" font-family="Liberation Sans" textLength="190.03" lengthAdjust="spacingAndGlyphs" >Геолого-литологические колонки</text>
<path d="M47,260.5 H59 L56,271.5 H44 Z" fill="#606060" stroke="#000" stroke-width="1.3"/><path d="M48.5,263.5 h8 M47.5,266.5 h8" stroke="#f0e000" stroke-width="1.4"/><path d="M43,273.5 H55 L56,271.5" stroke="#000" stroke-width="1.6" fill="#ccc"/>
<text x="64.0" y="270.5" font-size="12" fill="#000000" font-family="Liberation Sans" textLength="46.0" lengthAdjust="spacingAndGlyphs" >Легенда</text>
<rect x="28.5" y="283.5" width="8" height="8" fill="#f4f4f4" stroke="#9a9a9a" stroke-width="1"/>
<path d="M30.5,287.5 h4" stroke="#30407a" stroke-width="1"/>
<path d="M43,282.5 H48 L49,283.5 H55 V292.5 H43 Z" fill="#e2e2e2" stroke="#b8b8b8" stroke-width="1"/>
<path d="M44,293.5 L49,287.5 H53 L58,283.5" stroke="#000" stroke-width="3.4" fill="none" stroke-linecap="round"/><path d="M44,293.5 L49,287.5 H53 L58,283.5" stroke="#a00a0a" stroke-width="1.6" fill="none"/><circle cx="44.5" cy="293.3" r="1.2" fill="#ff1010"/>
<text x="64.0" y="290.5" font-size="12" fill="#000000" font-family="Liberation Sans" textLength="42.02" lengthAdjust="spacingAndGlyphs" >Трассы</text>
<rect x="47.5" y="303.5" width="8" height="8" fill="#f4f4f4" stroke="#9a9a9a" stroke-width="1"/>
<path d="M49.5,307.5 h4" stroke="#30407a" stroke-width="1"/>
<path d="M63,313.5 L68,307.5 H72 L77,303.5" stroke="#000" stroke-width="3.4" fill="none" stroke-linecap="round"/><path d="M63,313.5 L68,307.5 H72 L77,303.5" stroke="#a00a0a" stroke-width="1.6" fill="none"/><circle cx="63.5" cy="313.3" r="1.2" fill="#ff1010"/>
<text x="83.0" y="310.5" font-size="12" fill="#000000" font-family="Liberation Sans" textLength="127.01" lengthAdjust="spacingAndGlyphs" >Трасса-1 (L=2399.86м)</text>
<rect x="66.5" y="323.5" width="8" height="8" fill="#f4f4f4" stroke="#9a9a9a" stroke-width="1"/>
<path d="M68.5,327.5 h4" stroke="#30407a" stroke-width="1"/>
<path d="M70.5,325.5 v4" stroke="#30407a" stroke-width="1"/>
<path d="M81.5,323.0 H87 L88,324.5 H94.5 V332.0 H81.5 Z" fill="#e0e0e0" stroke="#333" stroke-width="1"/><path d="M81.5,332.0 L85,327.0 H97 L93.5,332.0 Z" fill="#cdcdcd" stroke="#333" stroke-width="1"/>
<text x="101.0" y="330.5" font-size="12" fill="#000000" font-family="Liberation Sans" textLength="40.52" lengthAdjust="spacingAndGlyphs" >Болота</text>
<path d="M81.5,343.0 H87 L88,344.5 H94.5 V352.0 H81.5 Z" fill="#e0e0e0" stroke="#333" stroke-width="1"/><path d="M81.5,352.0 L85,347.0 H97 L93.5,352.0 Z" fill="#cdcdcd" stroke="#333" stroke-width="1"/>
<text x="101.0" y="350.5" font-size="12" fill="#000000" font-family="Liberation Sans" textLength="175.01" lengthAdjust="spacingAndGlyphs" >Участки экзогенных процессов</text>
<rect x="66.5" y="363.5" width="8" height="8" fill="#f4f4f4" stroke="#9a9a9a" stroke-width="1"/>
<path d="M68.5,367.5 h4" stroke="#30407a" stroke-width="1"/>
<path d="M70.5,365.5 v4" stroke="#30407a" stroke-width="1"/>
<path d="M81.5,363.0 H87 L88,364.5 H94.5 V372.0 H81.5 Z" fill="#e0e0e0" stroke="#333" stroke-width="1"/><path d="M81.5,372.0 L85,367.0 H97 L93.5,372.0 Z" fill="#cdcdcd" stroke="#333" stroke-width="1"/>
<text x="101.0" y="370.5" font-size="12" fill="#000000" font-family="Liberation Sans" textLength="163.03" lengthAdjust="spacingAndGlyphs" >Гидрогеологические участки</text>
<rect x="66.5" y="383.5" width="8" height="8" fill="#f4f4f4" stroke="#9a9a9a" stroke-width="1"/>
<path d="M68.5,387.5 h4" stroke="#30407a" stroke-width="1"/>
<path d="M70.5,385.5 v4" stroke="#30407a" stroke-width="1"/>
<path d="M81.5,383.0 H87 L88,384.5 H94.5 V392.0 H81.5 Z" fill="#e0e0e0" stroke="#333" stroke-width="1"/><path d="M81.5,392.0 L85,387.0 H97 L93.5,392.0 Z" fill="#cdcdcd" stroke="#333" stroke-width="1"/>
<text x="101.0" y="390.5" font-size="12" fill="#000000" font-family="Liberation Sans" textLength="143.52" lengthAdjust="spacingAndGlyphs" >Геологические скважины</text>
<rect x="66.5" y="403.5" width="8" height="8" fill="#f4f4f4" stroke="#9a9a9a" stroke-width="1"/>
<path d="M68.5,407.5 h4" stroke="#30407a" stroke-width="1"/>
<path d="M81.5,403.0 H87 L88,404.5 H94.5 V412.0 H81.5 Z" fill="#e0e0e0" stroke="#333" stroke-width="1"/><path d="M81.5,412.0 L85,407.0 H97 L93.5,412.0 Z" fill="#cdcdcd" stroke="#333" stroke-width="1"/>
<text x="101.0" y="410.5" font-size="12" fill="#000000" font-family="Liberation Sans" textLength="111.52" lengthAdjust="spacingAndGlyphs" >Участки георазреза</text>
<rect x="85.5" y="423.5" width="8" height="8" fill="#f4f4f4" stroke="#9a9a9a" stroke-width="1"/>
<path d="M87.5,427.5 h4" stroke="#30407a" stroke-width="1"/>
<path d="M101,427.5 L106,421.5 H110 L115,426.5 L113,428.5 H101 Z" fill="#00e000" stroke="#000" stroke-width="0.9"/><path d="M105,424.5h1v1h-1z M108,423.5h1v1h-1z M110,425.5h1v1h-1z M107,426.5h1v1h-1z" fill="#000"/><rect x="112" y="423.5" width="4" height="2" fill="#f0f000"/><rect x="110" y="425.5" width="6" height="5" fill="#00e8f8"/><rect x="100" y="428.5" width="12" height="4" fill="#8a8a8a"/><path d="M101,429.5 l3,2 M104,429.5 l3,2 M107,429.5 l3,2" stroke="#000" stroke-width="0.8"/><path d="M100,433.0 H116" stroke="#000" stroke-width="1"/>
<text x="120.0" y="430.5" font-size="12" fill="#000000" font-family="Liberation Sans" textLength="178.95" lengthAdjust="spacingAndGlyphs" >ПК480+0.00 - ПК503+99.86 (k=0)</text>
<rect x="104.5" y="443.5" width="8" height="8" fill="#f4f4f4" stroke="#9a9a9a" stroke-width="1"/>
<path d="M106.5,447.5 h4" stroke="#30407a" stroke-width="1"/>
<path d="M108.5,445.5 v4" stroke="#30407a" stroke-width="1"/>
<path d="M119.5,443.5 Q127,445.5 134.5,440.5 V452.5 Q127,456.5 119.5,453.5 Z" fill="#7a7010" stroke="#000" stroke-width="1.2"/><path d="M122,446.5h1v1h-1z M126,447.5h1v1h-1z M130,445.5h1v1h-1z M124,450.5h1v1h-1z M128,451.5h1v1h-1z M132,449.5h1v1h-1z" fill="#000"/>
<text x="139.0" y="450.5" font-size="12" fill="#000000" font-family="Liberation Sans" textLength="116.01" lengthAdjust="spacingAndGlyphs" >Группа Техногенные</text>
<rect x="104.5" y="463.5" width="8" height="8" fill="#f4f4f4" stroke="#9a9a9a" stroke-width="1"/>
<path d="M106.5,467.5 h4" stroke="#30407a" stroke-width="1"/>
<path d="M108.5,465.5 v4" stroke="#30407a" stroke-width="1"/>
<path d="M119.5,463.5 Q127,465.5 134.5,460.5 V472.5 Q127,476.5 119.5,473.5 Z" fill="#7a7010" stroke="#000" stroke-width="1.2"/><path d="M122,466.5h1v1h-1z M126,467.5h1v1h-1z M130,465.5h1v1h-1z M124,470.5h1v1h-1z M128,471.5h1v1h-1z M132,469.5h1v1h-1z" fill="#000"/>
<text x="139.0" y="470.5" font-size="12" fill="#000000" font-family="Liberation Sans" textLength="81.05" lengthAdjust="spacingAndGlyphs" >Группа Почвы</text>
<rect x="104.5" y="483.5" width="8" height="8" fill="#f4f4f4" stroke="#9a9a9a" stroke-width="1"/>
<path d="M106.5,487.5 h4" stroke="#30407a" stroke-width="1"/>
<path d="M108.5,485.5 v4" stroke="#30407a" stroke-width="1"/>
<path d="M119.5,483.5 Q127,485.5 134.5,480.5 V492.5 Q127,496.5 119.5,493.5 Z" fill="#7a7010" stroke="#000" stroke-width="1.2"/><path d="M122,486.5h1v1h-1z M126,487.5h1v1h-1z M130,485.5h1v1h-1z M124,490.5h1v1h-1z M128,491.5h1v1h-1z M132,489.5h1v1h-1z" fill="#000"/>
<text x="139.0" y="490.5" font-size="12" fill="#000000" font-family="Liberation Sans" textLength="66.07" lengthAdjust="spacingAndGlyphs" >Группа QIII</text>
<rect x="104.5" y="503.5" width="8" height="8" fill="#f4f4f4" stroke="#9a9a9a" stroke-width="1"/>
<path d="M106.5,507.5 h4" stroke="#30407a" stroke-width="1"/>
<path d="M108.5,505.5 v4" stroke="#30407a" stroke-width="1"/>
<path d="M119.5,503.5 Q127,505.5 134.5,500.5 V512.5 Q127,516.5 119.5,513.5 Z" fill="#7a7010" stroke="#000" stroke-width="1.2"/><path d="M122,506.5h1v1h-1z M126,507.5h1v1h-1z M130,505.5h1v1h-1z M124,510.5h1v1h-1z M128,511.5h1v1h-1z M132,509.5h1v1h-1z" fill="#000"/>
<text x="139.0" y="510.5" font-size="12" fill="#000000" font-family="Liberation Sans" textLength="57.53" lengthAdjust="spacingAndGlyphs" >Группа P2</text>
<rect x="66.5" y="523.5" width="8" height="8" fill="#f4f4f4" stroke="#9a9a9a" stroke-width="1"/>
<path d="M68.5,527.5 h4" stroke="#30407a" stroke-width="1"/>
<path d="M70.5,525.5 v4" stroke="#30407a" stroke-width="1"/>
<path d="M81.5,523.0 H87 L88,524.5 H94.5 V532.0 H81.5 Z" fill="#e0e0e0" stroke="#333" stroke-width="1"/><path d="M81.5,532.0 L85,527.0 H97 L93.5,532.0 Z" fill="#cdcdcd" stroke="#333" stroke-width="1"/>
<text x="101.0" y="530.5" font-size="12" fill="#000000" font-family="Liberation Sans" textLength="52.57" lengthAdjust="spacingAndGlyphs" >Профили</text>
<rect x="28.5" y="543.5" width="8" height="8" fill="#f4f4f4" stroke="#9a9a9a" stroke-width="1"/>
<path d="M30.5,547.5 h4" stroke="#30407a" stroke-width="1"/>
<path d="M32.5,545.5 v4" stroke="#30407a" stroke-width="1"/>
<path d="M45,544.5 V553.5 M49.5,544.5 V553.5 M54,544.5 V553.5 M58,544.5 V553.5" stroke="#4a5a80" stroke-width="1.6"/><path d="M43,541.5 Q45,545.5 47,541.5 M47.5,541.5 Q49.5,545.5 51.5,541.5 M52,541.5 Q54,545.5 56,541.5 M56,541.5 Q58,545.5 60,541.5" stroke="#4a5a80" stroke-width="1.1" fill="none"/>
<text x="63.0" y="550.5" font-size="12" fill="#000000" font-family="Liberation Sans" textLength="66.07" lengthAdjust="spacingAndGlyphs" >Параметры</text>
</svg></body></html>
